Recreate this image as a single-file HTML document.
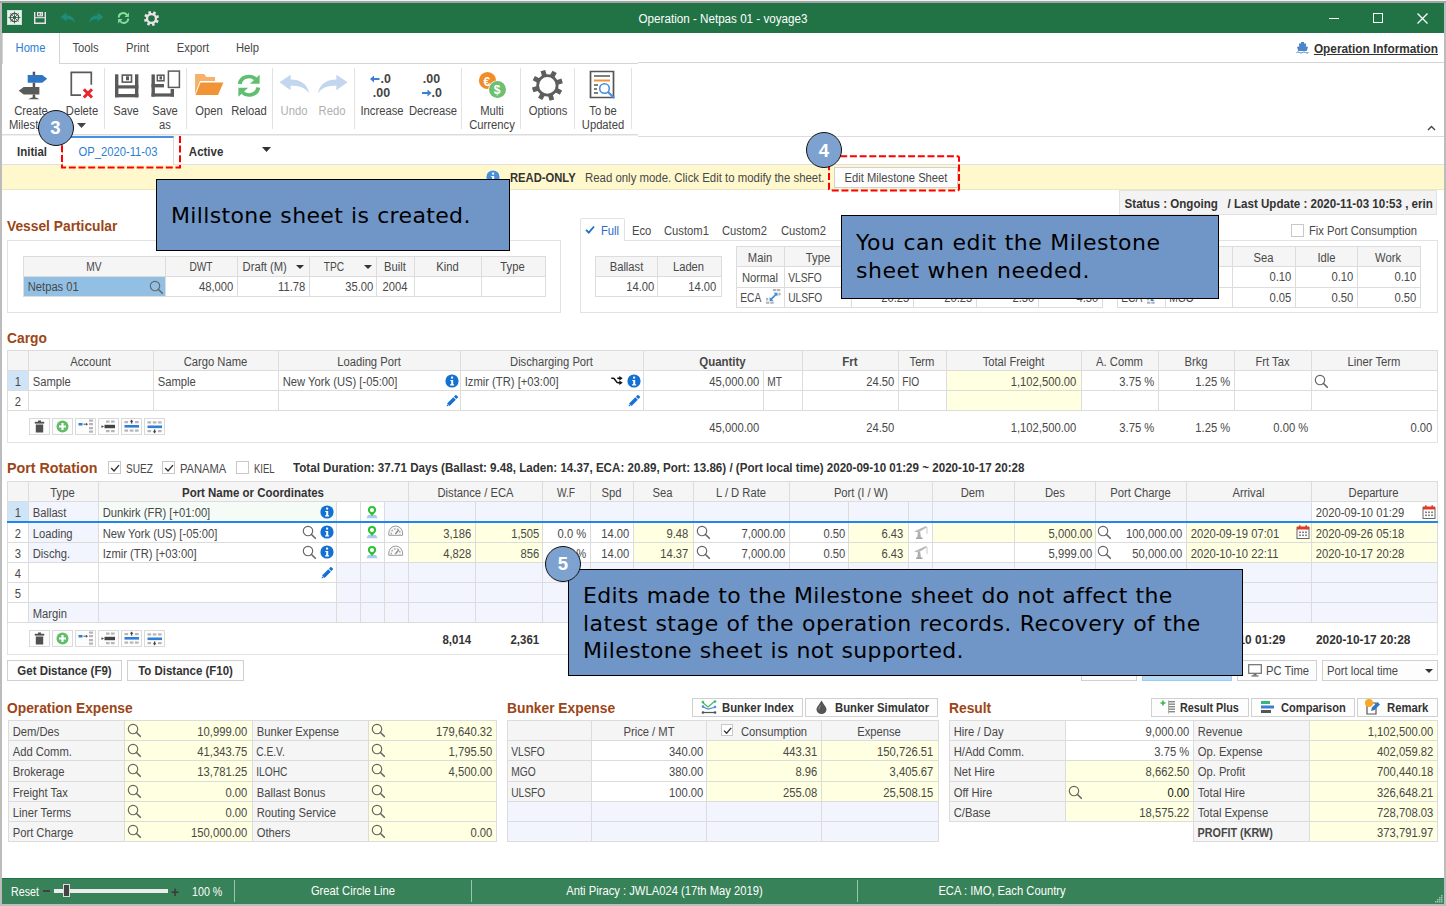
<!DOCTYPE html>
<html><head><meta charset="utf-8"><title>Operation - Netpas 01 - voyage3</title>
<style>
html,body{margin:0;padding:0;}
body{width:1446px;height:906px;overflow:hidden;position:relative;background:#fff;font-family:"Liberation Sans",sans-serif;font-size:12px;color:#484848;}
#root{position:absolute;left:0;top:0;width:1446px;height:906px;overflow:hidden;}
#root div,#root svg{position:absolute;box-sizing:border-box;}
.t{white-space:nowrap;overflow:visible;}
.b{font-weight:bold;color:#333;}
</style></head>
<body><div id="root">
<div style="left:0px;top:0px;width:1446px;height:906px;background:#bcbcbc;"></div>
<div style="left:0px;top:0px;width:1446px;height:1px;background:#f0f0f0;"></div>
<div style="left:0px;top:1px;width:1446px;height:2px;background:#a4a4a4;"></div>
<div style="left:2px;top:3px;width:1442px;height:901px;background:#fff;"></div>
<div style="left:2px;top:3px;width:1442px;height:30px;background:#217346;"></div>
<div class="t" style="left:2px;top:3.5px;width:1442px;height:31px;line-height:31px;text-align:center;transform-origin:center center;transform:scaleX(0.97);color:#fff;">Operation - Netpas 01 - voyage3</div>
<svg style="left:7px;top:10px" width="15" height="15" viewBox="0 0 15 15"><rect x="0.500" y="0.500" width="14" height="14" fill="#e9f1ec" stroke="#cfe0d5"/><circle cx="7.500" cy="7.500" r="4.200" fill="none" stroke="#3a5a48" stroke-width="1.300"/><circle cx="7.500" cy="7.500" r="1.600" fill="#3a5a48"/><path d="M7.500 1.500v12M1.500 7.500h12M3.300 3.300l8.400 8.400M11.700 3.300l-8.400 8.400" stroke="#3a5a48" stroke-width="0.800"/></svg>
<svg style="left:34px;top:12px" width="12" height="12" viewBox="0 0 12 12"><path d="M0.700 0v11.300h10.600V0" fill="none" stroke="#ece2e8" stroke-width="1.400"/><path d="M1 5.700h10" stroke="#ece2e8" stroke-width="1.100"/><rect x="3.600" y="0.600" width="4.800" height="3.200" fill="none" stroke="#ece2e8" stroke-width="1.200"/><rect x="5.600" y="1.200" width="1.800" height="2" fill="#ece2e8"/></svg>
<svg style="left:60px;top:11.5px" width="16" height="12" viewBox="0 0 16 12"><path d="M0.500 5L6.500 0.500V3.200C11.500 3.200 14.500 6 15 11C13 8 10.500 7 6.500 7V9.500z" fill="#1f8c7a"/></svg>
<svg style="left:88px;top:11.5px" width="16" height="12" viewBox="0 0 16 12"><path d="M15.500 5L9.500 0.500V3.200C4.500 3.200 1.500 6 1 11C3 8 5.500 7 9.500 7V9.500z" fill="#1f8c7a"/></svg>
<svg style="left:117px;top:12px" width="13" height="12" viewBox="0 0 15 14" preserveAspectRatio="none"><path d="M2 6.500A5.200 5.200 0 0111.500 3.500" fill="none" stroke="#84dc9c" stroke-width="2.200"/><path d="M13.800 0.500V5.800H8.500z" fill="#84dc9c"/><path d="M13 7.500A5.200 5.200 0 013.500 10.500" fill="none" stroke="#84dc9c" stroke-width="2.200"/><path d="M1.200 13.500V8.200H6.500z" fill="#84dc9c"/></svg>
<svg style="left:143.8px;top:10.5px" width="15.0" height="15.0" viewBox="0 0 15.0 15.0"><circle cx="7.5" cy="7.5" r="4.45" fill="none" stroke="#ebe3e7" stroke-width="2.30"/><rect x="6.20" y="0" width="2.60" height="2.90" fill="#ebe3e7" transform="rotate(-17.0 7.5 7.5)"/><rect x="6.20" y="0" width="2.60" height="2.90" fill="#ebe3e7" transform="rotate(28.0 7.5 7.5)"/><rect x="6.20" y="0" width="2.60" height="2.90" fill="#ebe3e7" transform="rotate(73.0 7.5 7.5)"/><rect x="6.20" y="0" width="2.60" height="2.90" fill="#ebe3e7" transform="rotate(118.0 7.5 7.5)"/><rect x="6.20" y="0" width="2.60" height="2.90" fill="#ebe3e7" transform="rotate(163.0 7.5 7.5)"/><rect x="6.20" y="0" width="2.60" height="2.90" fill="#ebe3e7" transform="rotate(208.0 7.5 7.5)"/><rect x="6.20" y="0" width="2.60" height="2.90" fill="#ebe3e7" transform="rotate(253.0 7.5 7.5)"/><rect x="6.20" y="0" width="2.60" height="2.90" fill="#ebe3e7" transform="rotate(298.0 7.5 7.5)"/></svg>
<div style="left:1329px;top:18px;width:10px;height:1px;background:#fff;"></div>
<div style="left:1373px;top:13px;width:10px;height:10px;border:1px solid #fff;"></div>
<svg style="left:1417px;top:13px" width="11" height="11" viewBox="0 0 11 11"><path d="M0.500 0.500l10 10M10.500 0.500l-10 10" stroke="#fff" stroke-width="1.300"/></svg>
<div style="left:638px;top:62px;width:806px;height:1px;background:#d4d4d4;"></div>
<div style="left:2px;top:63px;width:636px;height:1px;background:#d4d4d4;"></div>
<div style="left:2px;top:33px;width:58px;height:31px;background:#fff;border:1px solid #d4d4d4;border-bottom:none;border-top:none;"></div>
<div class="t" style="left:2px;top:34px;width:57px;height:29px;line-height:29px;text-align:center;transform-origin:center center;transform:scaleX(0.935);color:#2a7fd4;">Home</div>
<div class="t" style="left:60px;top:34px;width:51px;height:29px;line-height:29px;text-align:center;transform-origin:center center;transform:scaleX(0.935);">Tools</div>
<div class="t" style="left:112px;top:34px;width:51px;height:29px;line-height:29px;text-align:center;transform-origin:center center;transform:scaleX(0.935);">Print</div>
<div class="t" style="left:163px;top:34px;width:60px;height:29px;line-height:29px;text-align:center;transform-origin:center center;transform:scaleX(0.935);">Export</div>
<div class="t" style="left:222px;top:34px;width:51px;height:29px;line-height:29px;text-align:center;transform-origin:center center;transform:scaleX(0.935);">Help</div>
<div class="t b" style="left:1300px;top:34.5px;width:138px;height:29px;line-height:29px;text-align:right;padding-right:0px;transform-origin:right center;transform:scaleX(0.985);"><u>Operation Information</u></div>
<svg style="left:1296px;top:41px" width="13" height="13" viewBox="0 0 13 13"><path d="M3 5V2.500h2V1h3v1.500h2V5z" fill="#4a86c9"/><path d="M1 6l5.500-1.800L12 6l-1.300 4H2.300z" fill="#4a86c9"/><path d="M0.500 11.500q1.500-1.200 3 0t3 0t3 0t3 0" fill="none" stroke="#4a86c9" stroke-width="1"/></svg>
<div style="left:2px;top:134px;width:636px;height:1px;background:#dcdcdc;"></div>
<div style="left:2px;top:135px;width:636px;height:1px;background:#efefef;"></div>
<div style="left:638px;top:136px;width:806px;height:1px;background:#dcdcdc;"></div>
<div style="left:104px;top:68px;width:1px;height:61px;background:#e2e2e2;"></div>
<div style="left:186px;top:68px;width:1px;height:61px;background:#e2e2e2;"></div>
<div style="left:272px;top:68px;width:1px;height:61px;background:#e2e2e2;"></div>
<div style="left:354px;top:68px;width:1px;height:61px;background:#e2e2e2;"></div>
<div style="left:461px;top:68px;width:1px;height:61px;background:#e2e2e2;"></div>
<div style="left:520px;top:68px;width:1px;height:61px;background:#e2e2e2;"></div>
<div style="left:574px;top:68px;width:1px;height:61px;background:#e2e2e2;"></div>
<div style="left:631px;top:68px;width:1px;height:61px;background:#e2e2e2;"></div>
<div class="t" style="left:8px;top:104px;width:46px;height:14px;line-height:14px;text-align:center;transform-origin:center center;transform:scaleX(0.935);color:#444;">Create</div>
<div class="t" style="left:4px;top:118px;width:58px;height:14px;line-height:14px;text-align:center;transform-origin:center center;transform:scaleX(0.935);color:#444;">Milestone</div>
<div class="t" style="left:60px;top:104px;width:44px;height:14px;line-height:14px;text-align:center;transform-origin:center center;transform:scaleX(0.935);color:#444;">Delete</div>
<svg style="left:77px;top:123px" width="9" height="5" viewBox="0 0 9 5"><path d="M0 0h9L4.500 5z" fill="#444"/></svg>
<div class="t" style="left:106px;top:104px;width:40px;height:14px;line-height:14px;text-align:center;transform-origin:center center;transform:scaleX(0.935);color:#444;">Save</div>
<div class="t" style="left:146px;top:104px;width:38px;height:14px;line-height:14px;text-align:center;transform-origin:center center;transform:scaleX(0.935);color:#444;">Save</div>
<div class="t" style="left:146px;top:118px;width:38px;height:14px;line-height:14px;text-align:center;transform-origin:center center;transform:scaleX(0.935);color:#444;">as</div>
<div class="t" style="left:188px;top:104px;width:42px;height:14px;line-height:14px;text-align:center;transform-origin:center center;transform:scaleX(0.935);color:#444;">Open</div>
<div class="t" style="left:226px;top:104px;width:46px;height:14px;line-height:14px;text-align:center;transform-origin:center center;transform:scaleX(0.935);color:#444;">Reload</div>
<div class="t" style="left:274px;top:104px;width:40px;height:14px;line-height:14px;text-align:center;transform-origin:center center;transform:scaleX(0.935);color:#b0b0b0;">Undo</div>
<div class="t" style="left:312px;top:104px;width:40px;height:14px;line-height:14px;text-align:center;transform-origin:center center;transform:scaleX(0.935);color:#b0b0b0;">Redo</div>
<div class="t" style="left:356px;top:104px;width:52px;height:14px;line-height:14px;text-align:center;transform-origin:center center;transform:scaleX(0.935);color:#444;">Increase</div>
<div class="t" style="left:406px;top:104px;width:54px;height:14px;line-height:14px;text-align:center;transform-origin:center center;transform:scaleX(0.935);color:#444;">Decrease</div>
<div class="t" style="left:464px;top:104px;width:56px;height:14px;line-height:14px;text-align:center;transform-origin:center center;transform:scaleX(0.935);color:#444;">Multi</div>
<div class="t" style="left:464px;top:118px;width:56px;height:14px;line-height:14px;text-align:center;transform-origin:center center;transform:scaleX(0.935);color:#444;">Currency</div>
<div class="t" style="left:522px;top:104px;width:52px;height:14px;line-height:14px;text-align:center;transform-origin:center center;transform:scaleX(0.935);color:#444;">Options</div>
<div class="t" style="left:576px;top:104px;width:54px;height:14px;line-height:14px;text-align:center;transform-origin:center center;transform:scaleX(0.935);color:#444;">To be</div>
<div class="t" style="left:576px;top:118px;width:54px;height:14px;line-height:14px;text-align:center;transform-origin:center center;transform:scaleX(0.935);color:#444;">Updated</div>
<svg style="left:1427px;top:125px" width="9" height="6" viewBox="0 0 9 6"><path d="M1 5l3.500-3.500L8 5" fill="none" stroke="#444" stroke-width="1.400"/></svg>
<svg style="left:17px;top:70px" width="32" height="32" viewBox="0 0 32 32"><rect x="15.700" y="1.700" width="2.500" height="4" fill="#555"/><path d="M10.700 5h14.500l5 3.850-5 3.850H10.700z" fill="#2f74c5"/><rect x="15.700" y="12.700" width="2.500" height="4.500" fill="#555"/><path d="M22.400 17H6.700l-5 3.750 5 3.750h15.700z" fill="#5a5a5a"/><rect x="15.700" y="24.500" width="2.500" height="3.500" fill="#555"/><path d="M11.400 29.300q5.500-4.200 11 0z" fill="#5a5a5a"/></svg>
<svg style="left:69px;top:70px" width="28" height="32" viewBox="0 0 28 32"><path d="M1.500 2.400h20.800V14.800" fill="none" stroke="#5a5a5a" stroke-width="1.700"/><path d="M2.300 2.400v22.700h9.700" fill="none" stroke="#5a5a5a" stroke-width="1.700"/><path d="M14.800 19.300l8.200 8.200M23 19.300l-8.200 8.200" stroke="#e8242c" stroke-width="3"/></svg>
<svg style="left:115px;top:73.5px" width="24" height="24" viewBox="0 0 24 24"><g fill="#5a5a5a"><rect x="0" y="0.300" width="3.400" height="23"/><rect x="20" y="0.300" width="3.400" height="23"/><rect x="0" y="20" width="23.400" height="3.300"/><rect x="0" y="11.300" width="23.400" height="3.200"/><rect x="11" y="2.300" width="3" height="4"/></g><rect x="7.300" y="1.100" width="9.200" height="7" fill="none" stroke="#5a5a5a" stroke-width="1.600"/></svg>
<svg style="left:151px;top:70px" width="30" height="28" viewBox="0 0 30 28"><g fill="#5a5a5a"><rect x="0.500" y="4.400" width="3.400" height="22.200"/><rect x="0.500" y="23.400" width="22.500" height="3.200"/><rect x="19.600" y="19" width="3.400" height="7.600"/><rect x="0.500" y="14" width="12.500" height="3.400"/><rect x="8.500" y="6.300" width="2.500" height="3.200"/></g><rect x="6.300" y="5.200" width="6.700" height="5.600" fill="none" stroke="#5a5a5a" stroke-width="1.500"/><rect x="17.400" y="1.100" width="11" height="16.300" fill="#fff" stroke="#5a5a5a" stroke-width="1.500"/></svg>
<svg style="left:194px;top:73px" width="30" height="24" viewBox="0 0 30 24"><path d="M1 1h9l2.500 3H21v4H6L1 21z" fill="#f6b26b"/><path d="M6.500 9.500H29.500L24 22H1.500z" fill="#f29436"/></svg>
<svg style="left:236.500px;top:73.500px" width="24" height="23.500" viewBox="0 0 26 28" preserveAspectRatio="none"><path d="M3 12A10 10 0 0120 6" fill="none" stroke="#5fbf6f" stroke-width="4.400"/><path d="M24.500 1v10.500H14z" fill="#5fbf6f"/><path d="M23 16A10 10 0 016 22" fill="none" stroke="#5fbf6f" stroke-width="4.400"/><path d="M1.500 27V16.500H12z" fill="#5fbf6f"/></svg>
<svg style="left:279px;top:73.500px" width="31" height="20" viewBox="0 0 32 24" preserveAspectRatio="none"><path d="M0.500 10L12 1v5.500C22 6.500 29.500 12 31 23C26.500 16 21 14 12 14v5.500z" fill="#c2d6ee"/></svg>
<svg style="left:316.500px;top:73.500px" width="31" height="20" viewBox="0 0 32 24" preserveAspectRatio="none"><path d="M31.500 10L20 1v5.500C10 6.500 2.500 12 1 23C5.500 16 11 14 20 14v5.500z" fill="#c2d6ee"/></svg>
<div class="t" style="left:370px;top:71.5px;width:24px;height:14px;line-height:14px;padding-left:11px;transform-origin:left center;transform:scaleX(0.955);font-size:13px;color:#444;"><b>.0</b></div>
<div class="t" style="left:370px;top:85.5px;width:24px;height:14px;line-height:14px;padding-left:3px;transform-origin:left center;transform:scaleX(0.955);font-size:13px;color:#444;"><b>.00</b></div>
<svg style="left:370px;top:75px" width="10" height="8" viewBox="0 0 10 8"><path d="M0 4l4-3.500v2.400h5.500v2.200H4v2.400z" fill="#3b7fd0"/></svg>
<div class="t" style="left:420px;top:71.5px;width:30px;height:14px;line-height:14px;padding-left:3px;transform-origin:left center;transform:scaleX(0.955);font-size:13px;color:#444;"><b>.00</b></div>
<div class="t" style="left:420px;top:85.5px;width:30px;height:14px;line-height:14px;padding-left:12px;transform-origin:left center;transform:scaleX(0.955);font-size:13px;color:#444;"><b>.0</b></div>
<svg style="left:422px;top:89px" width="10" height="8" viewBox="0 0 10 8"><path d="M9.500 4l-4-3.500v2.400H0v2.200h5.500v2.400z" fill="#3b7fd0"/></svg>
<svg style="left:478px;top:71px" width="30" height="28" viewBox="0 0 30 28"><circle cx="9.500" cy="9.500" r="8.600" fill="#f28c28"/><circle cx="19.500" cy="18.500" r="9.300" fill="#fff"/><circle cx="19.500" cy="18.500" r="8.500" fill="#6cc070"/><text x="5.500" y="14.500" font-family="Liberation Sans,sans-serif" font-weight="bold" font-size="12" fill="#fff">€</text><text x="15.800" y="23" font-family="Liberation Sans,sans-serif" font-weight="bold" font-size="12" fill="#fff">$</text></svg>
<svg style="left:532.1px;top:70px" width="30.8" height="30.8" viewBox="0 0 30.8 30.8"><circle cx="15.4" cy="15.4" r="9.70" fill="none" stroke="#5e5e5e" stroke-width="2.80"/><rect x="13.00" y="0" width="4.80" height="5.30" fill="#5e5e5e" transform="rotate(-17.0 15.4 15.4)"/><rect x="13.00" y="0" width="4.80" height="5.30" fill="#5e5e5e" transform="rotate(28.0 15.4 15.4)"/><rect x="13.00" y="0" width="4.80" height="5.30" fill="#5e5e5e" transform="rotate(73.0 15.4 15.4)"/><rect x="13.00" y="0" width="4.80" height="5.30" fill="#5e5e5e" transform="rotate(118.0 15.4 15.4)"/><rect x="13.00" y="0" width="4.80" height="5.30" fill="#5e5e5e" transform="rotate(163.0 15.4 15.4)"/><rect x="13.00" y="0" width="4.80" height="5.30" fill="#5e5e5e" transform="rotate(208.0 15.4 15.4)"/><rect x="13.00" y="0" width="4.80" height="5.30" fill="#5e5e5e" transform="rotate(253.0 15.4 15.4)"/><rect x="13.00" y="0" width="4.80" height="5.30" fill="#5e5e5e" transform="rotate(298.0 15.4 15.4)"/></svg>
<svg style="left:589px;top:70px" width="28" height="30" viewBox="0 0 28 30"><path d="M1.500 1.500h23v26h-23z" fill="#fff" stroke="#555" stroke-width="1.700"/><path d="M5 6h16" stroke="#555" stroke-width="1.500"/><path d="M5 10.500h16" stroke="#f29436" stroke-width="2"/><path d="M5 15h4M5 19h3M5 23h4" stroke="#555" stroke-width="1.700"/><circle cx="15.500" cy="18.500" r="4.800" fill="#fff" stroke="#4a8fd8" stroke-width="1.600"/><path d="M19 22l6.300 6" stroke="#4a8fd8" stroke-width="2.200"/></svg>
<div style="left:2px;top:164px;width:1442px;height:1px;background:#e0e0e0;"></div>
<div class="t b" style="left:8px;top:138.8px;width:48px;height:27px;line-height:27px;text-align:center;transform-origin:center center;transform:scaleX(0.955);">Initial</div>
<div style="left:62px;top:136px;width:112px;height:29px;background:#fff;border:1px solid #d9d9d9;border-top:2px solid #4a90e2;border-bottom:none;"></div>
<div class="t" style="left:62px;top:138.8px;width:112px;height:27px;line-height:27px;text-align:center;transform-origin:center center;transform:scaleX(0.935);color:#2a7fd4;">OP_2020-11-03</div>
<div class="t b" style="left:186px;top:138.8px;width:50px;height:27px;line-height:27px;padding-left:3px;transform-origin:left center;transform:scaleX(0.955);">Active</div>
<svg style="left:262px;top:147px" width="9" height="5" viewBox="0 0 9 5"><path d="M0 0h9L4.500 5z" fill="#333"/></svg>
<div style="left:2px;top:165px;width:1442px;height:25px;background:#fff8cd;border-bottom:1px solid #ebe6c3;"></div>
<svg style="left:485.7px;top:169.6px" width="14" height="14" viewBox="0 0 14 14"><circle cx="7" cy="7" r="6.600" fill="#4a8fd9"/><rect x="6.100" y="2.600" width="2" height="2" fill="#fff"/><path d="M5.300 6h2.900v4.300h0.900v1.100H5.100v-1.100h1.100V7.100H5.300z" fill="#fff"/></svg>
<div class="t b" style="left:510px;top:165px;width:70px;height:26px;line-height:26px;padding-left:0px;transform-origin:left center;transform:scaleX(0.935);">READ-ONLY</div>
<div class="t" style="left:585px;top:165px;width:250px;height:26px;line-height:26px;padding-left:0px;transform-origin:left center;transform:scaleX(0.95);">Read only mode. Click Edit to modify the sheet.</div>
<div style="left:834px;top:167px;width:124px;height:21px;background:#fdfdfd;border:1px solid #d0d0d0;"></div>
<div class="t" style="left:834px;top:167.8px;width:124px;height:21px;line-height:21px;text-align:center;transform-origin:center center;transform:scaleX(0.935);">Edit Milestone Sheet</div>
<div style="left:1119px;top:190px;width:318px;height:25px;background:#f3f3f3;border:1px solid #e2e2e2;"></div>
<div class="t b" style="left:1119px;top:190.5px;width:318px;height:26px;line-height:26px;text-align:center;transform-origin:center center;transform:scaleX(0.965);">Status : Ongoing &nbsp; / Last Update : 2020-11-03 10:53 , erin</div>
<div class="t" style="left:7px;top:215px;width:200px;height:22px;line-height:22px;padding-left:0px;transform-origin:left center;transform:scaleX(0.985);color:#9c4516;font-size:14px;font-weight:bold;">Vessel Particular</div>
<div style="left:7px;top:240px;width:554px;height:73px;background:#fff;border:1px solid #e2e2e2;"></div>
<div style="left:24px;top:257px;width:141px;height:19px;background:#f5f5f5;"></div>
<div style="left:166px;top:257px;width:71px;height:19px;background:#f5f5f5;"></div>
<div style="left:238px;top:257px;width:71px;height:19px;background:#f5f5f5;"></div>
<div style="left:310px;top:257px;width:66px;height:19px;background:#f5f5f5;"></div>
<div style="left:377px;top:257px;width:37px;height:19px;background:#f5f5f5;"></div>
<div style="left:415px;top:257px;width:66px;height:19px;background:#f5f5f5;"></div>
<div style="left:482px;top:257px;width:63px;height:19px;background:#f5f5f5;"></div>
<div style="left:24px;top:277px;width:141px;height:19px;background:#92c0e4;"></div>
<div style="left:23px;top:256px;width:523px;height:1px;background:#dcdcdc;"></div>
<div style="left:23px;top:276px;width:523px;height:1px;background:#dcdcdc;"></div>
<div style="left:23px;top:296px;width:523px;height:1px;background:#dcdcdc;"></div>
<div style="left:23px;top:256px;width:1px;height:41px;background:#dcdcdc;"></div>
<div style="left:165px;top:256px;width:1px;height:41px;background:#dcdcdc;"></div>
<div style="left:237px;top:256px;width:1px;height:41px;background:#dcdcdc;"></div>
<div style="left:309px;top:256px;width:1px;height:41px;background:#dcdcdc;"></div>
<div style="left:376px;top:256px;width:1px;height:41px;background:#dcdcdc;"></div>
<div style="left:414px;top:256px;width:1px;height:41px;background:#dcdcdc;"></div>
<div style="left:481px;top:256px;width:1px;height:41px;background:#dcdcdc;"></div>
<div style="left:545px;top:256px;width:1px;height:41px;background:#dcdcdc;"></div>
<div class="t" style="left:23px;top:256.8px;width:142px;height:21px;line-height:21px;text-align:center;transform-origin:center center;transform:scaleX(0.85);">MV</div>
<div class="t" style="left:165px;top:256.8px;width:72px;height:21px;line-height:21px;text-align:center;transform-origin:center center;transform:scaleX(0.85);">DWT</div>
<div class="t" style="left:237px;top:256.8px;width:72px;height:21px;line-height:21px;padding-left:6px;transform-origin:left center;transform:scaleX(0.935);">Draft (M)</div>
<svg style="left:296px;top:265px" width="8" height="4" viewBox="0 0 8 4"><path d="M0 0h8L4 4z" fill="#333"/></svg>
<div class="t" style="left:309px;top:256.8px;width:50px;height:21px;line-height:21px;text-align:center;transform-origin:center center;transform:scaleX(0.85);">TPC</div>
<svg style="left:364px;top:265px" width="8" height="4" viewBox="0 0 8 4"><path d="M0 0h8L4 4z" fill="#333"/></svg>
<div class="t" style="left:376px;top:256.8px;width:38px;height:21px;line-height:21px;text-align:center;transform-origin:center center;transform:scaleX(0.935);">Built</div>
<div class="t" style="left:414px;top:256.8px;width:67px;height:21px;line-height:21px;text-align:center;transform-origin:center center;transform:scaleX(0.935);">Kind</div>
<div class="t" style="left:481px;top:256.8px;width:63px;height:21px;line-height:21px;text-align:center;transform-origin:center center;transform:scaleX(0.935);">Type</div>
<div class="t" style="left:23px;top:276.8px;width:142px;height:21px;line-height:21px;padding-left:5px;transform-origin:left center;transform:scaleX(0.935);">Netpas 01</div>
<svg style="left:149px;top:279.8px" width="15" height="15" viewBox="0 0 15 15"><circle cx="6" cy="6" r="4.700" fill="none" stroke="#666" stroke-width="1.150"/><path d="M9.500 9.500L13.300 13.300" stroke="#666" stroke-width="1.600" stroke-linecap="round"/></svg>
<div class="t" style="left:165px;top:276.8px;width:72px;height:21px;line-height:21px;text-align:right;padding-right:4px;transform-origin:right center;transform:scaleX(0.935);">48,000</div>
<div class="t" style="left:237px;top:276.8px;width:72px;height:21px;line-height:21px;text-align:right;padding-right:4px;transform-origin:right center;transform:scaleX(0.935);">11.78</div>
<div class="t" style="left:309px;top:276.8px;width:68px;height:21px;line-height:21px;text-align:right;padding-right:4px;transform-origin:right center;transform:scaleX(0.935);">35.00</div>
<div class="t" style="left:376px;top:276.8px;width:38px;height:21px;line-height:21px;text-align:center;transform-origin:center center;transform:scaleX(0.935);">2004</div>
<div style="left:580px;top:240px;width:858px;height:73px;background:#fff;border:1px solid #e2e2e2;"></div>
<div style="left:580px;top:218px;width:45px;height:23px;background:#fff;border:1px solid #e2e2e2;border-bottom:none;border-radius:2px 2px 0 0;"></div>
<svg style="left:585px;top:225px" width="10" height="9" viewBox="0 0 10 9"><path d="M1 4.800l2.800 2.800L9 1.500" fill="none" stroke="#1f6fd0" stroke-width="1.800"/></svg>
<div class="t" style="left:601px;top:220.5px;width:24px;height:21px;line-height:21px;padding-left:0px;transform-origin:left center;transform:scaleX(0.935);color:#2b6cc4;">Full</div>
<div class="t" style="left:632px;top:220.5px;width:30px;height:21px;line-height:21px;padding-left:0px;transform-origin:left center;transform:scaleX(0.935);">Eco</div>
<div class="t" style="left:664px;top:220.5px;width:50px;height:21px;line-height:21px;padding-left:0px;transform-origin:left center;transform:scaleX(0.935);">Custom1</div>
<div class="t" style="left:722px;top:220.5px;width:50px;height:21px;line-height:21px;padding-left:0px;transform-origin:left center;transform:scaleX(0.935);">Custom2</div>
<div class="t" style="left:781px;top:220.5px;width:50px;height:21px;line-height:21px;padding-left:0px;transform-origin:left center;transform:scaleX(0.935);">Custom2</div>
<div style="left:596px;top:257px;width:61px;height:19px;background:#f5f5f5;"></div>
<div style="left:658px;top:257px;width:63px;height:19px;background:#f5f5f5;"></div>
<div style="left:595px;top:256px;width:127px;height:1px;background:#dcdcdc;"></div>
<div style="left:595px;top:276px;width:127px;height:1px;background:#dcdcdc;"></div>
<div style="left:595px;top:296px;width:127px;height:1px;background:#dcdcdc;"></div>
<div style="left:595px;top:256px;width:1px;height:41px;background:#dcdcdc;"></div>
<div style="left:657px;top:256px;width:1px;height:41px;background:#dcdcdc;"></div>
<div style="left:721px;top:256px;width:1px;height:41px;background:#dcdcdc;"></div>
<div class="t" style="left:595px;top:256.8px;width:63px;height:21px;line-height:21px;text-align:center;transform-origin:center center;transform:scaleX(0.935);">Ballast</div>
<div class="t" style="left:657px;top:256.8px;width:63px;height:21px;line-height:21px;text-align:center;transform-origin:center center;transform:scaleX(0.935);">Laden</div>
<div class="t" style="left:595px;top:276.8px;width:63px;height:21px;line-height:21px;text-align:right;padding-right:4px;transform-origin:right center;transform:scaleX(0.935);">14.00</div>
<div class="t" style="left:657px;top:276.8px;width:63px;height:21px;line-height:21px;text-align:right;padding-right:4px;transform-origin:right center;transform:scaleX(0.935);">14.00</div>
<div style="left:737px;top:247px;width:47px;height:19px;background:#f5f5f5;"></div>
<div style="left:785px;top:247px;width:66px;height:19px;background:#f5f5f5;"></div>
<div style="left:852px;top:247px;width:61px;height:19px;background:#f5f5f5;"></div>
<div style="left:914px;top:247px;width:62px;height:19px;background:#f5f5f5;"></div>
<div style="left:977px;top:247px;width:61px;height:19px;background:#f5f5f5;"></div>
<div style="left:1039px;top:247px;width:63px;height:19px;background:#f5f5f5;"></div>
<div style="left:736px;top:246px;width:367px;height:1px;background:#dcdcdc;"></div>
<div style="left:736px;top:266px;width:367px;height:1px;background:#dcdcdc;"></div>
<div style="left:736px;top:287px;width:367px;height:1px;background:#dcdcdc;"></div>
<div style="left:736px;top:307px;width:367px;height:1px;background:#dcdcdc;"></div>
<div style="left:736px;top:246px;width:1px;height:62px;background:#dcdcdc;"></div>
<div style="left:784px;top:246px;width:1px;height:62px;background:#dcdcdc;"></div>
<div style="left:851px;top:246px;width:1px;height:62px;background:#dcdcdc;"></div>
<div style="left:913px;top:246px;width:1px;height:62px;background:#dcdcdc;"></div>
<div style="left:976px;top:246px;width:1px;height:62px;background:#dcdcdc;"></div>
<div style="left:1038px;top:246px;width:1px;height:62px;background:#dcdcdc;"></div>
<div style="left:1102px;top:246px;width:1px;height:62px;background:#dcdcdc;"></div>
<div class="t" style="left:736px;top:247.5px;width:48px;height:21px;line-height:21px;text-align:center;transform-origin:center center;transform:scaleX(0.935);">Main</div>
<div class="t" style="left:784px;top:247.5px;width:68px;height:21px;line-height:21px;text-align:center;transform-origin:center center;transform:scaleX(0.935);">Type</div>
<div class="t" style="left:736px;top:267.5px;width:48px;height:20px;line-height:20px;text-align:center;transform-origin:center center;transform:scaleX(0.935);">Normal</div>
<div class="t" style="left:784px;top:267.5px;width:68px;height:20px;line-height:20px;padding-left:5px;transform-origin:left center;transform:scaleX(0.85);">VLSFO</div>
<div class="t" style="left:736px;top:287.5px;width:30px;height:20px;line-height:20px;padding-left:5px;transform-origin:left center;transform:scaleX(0.85);">ECA</div>
<div class="t" style="left:784px;top:287.5px;width:68px;height:20px;line-height:20px;padding-left:5px;transform-origin:left center;transform:scaleX(0.85);">ULSFO</div>
<svg style="left:766px;top:289.4px" width="16" height="15" viewBox="0 0 16 15"><g fill="#b4b4b4"><rect x="6.800" y="0" width="3.400" height="2.200"/><rect x="10.900" y="0" width="3.400" height="2.200"/><rect x="12.400" y="3.800" width="2.200" height="2.600"/><rect x="0" y="8.800" width="2.200" height="2.600"/><rect x="0" y="12.600" width="3.400" height="2.200"/><rect x="4.300" y="12.600" width="3.400" height="2.200"/></g><path d="M5 10.400L10 5.400" stroke="#3d8ad8" stroke-width="1.600"/><path d="M7.600 3.700h3.900v3.900z" fill="#3d8ad8"/><path d="M3.600 8v3.900h3.900z" fill="#3d8ad8"/></svg>
<div class="t" style="left:851px;top:287.5px;width:62px;height:20px;line-height:20px;text-align:right;padding-right:4px;transform-origin:right center;transform:scaleX(0.935);">20.25</div>
<div class="t" style="left:913px;top:287.5px;width:63px;height:20px;line-height:20px;text-align:right;padding-right:4px;transform-origin:right center;transform:scaleX(0.935);">20.25</div>
<div class="t" style="left:976px;top:287.5px;width:62px;height:20px;line-height:20px;text-align:right;padding-right:4px;transform-origin:right center;transform:scaleX(0.935);">2.50</div>
<div class="t" style="left:1038px;top:287.5px;width:64px;height:20px;line-height:20px;text-align:right;padding-right:4px;transform-origin:right center;transform:scaleX(0.935);">4.50</div>
<div style="left:1118px;top:247px;width:47px;height:19px;background:#f5f5f5;"></div>
<div style="left:1166px;top:247px;width:66px;height:19px;background:#f5f5f5;"></div>
<div style="left:1233px;top:247px;width:62px;height:19px;background:#f5f5f5;"></div>
<div style="left:1296px;top:247px;width:61px;height:19px;background:#f5f5f5;"></div>
<div style="left:1358px;top:247px;width:62px;height:19px;background:#f5f5f5;"></div>
<div style="left:1117px;top:246px;width:304px;height:1px;background:#dcdcdc;"></div>
<div style="left:1117px;top:266px;width:304px;height:1px;background:#dcdcdc;"></div>
<div style="left:1117px;top:287px;width:304px;height:1px;background:#dcdcdc;"></div>
<div style="left:1117px;top:307px;width:304px;height:1px;background:#dcdcdc;"></div>
<div style="left:1117px;top:246px;width:1px;height:62px;background:#dcdcdc;"></div>
<div style="left:1165px;top:246px;width:1px;height:62px;background:#dcdcdc;"></div>
<div style="left:1232px;top:246px;width:1px;height:62px;background:#dcdcdc;"></div>
<div style="left:1295px;top:246px;width:1px;height:62px;background:#dcdcdc;"></div>
<div style="left:1357px;top:246px;width:1px;height:62px;background:#dcdcdc;"></div>
<div style="left:1420px;top:246px;width:1px;height:62px;background:#dcdcdc;"></div>
<div class="t" style="left:1117px;top:287.5px;width:30px;height:20px;line-height:20px;padding-left:5px;transform-origin:left center;transform:scaleX(0.85);">ECA</div>
<div class="t" style="left:1165px;top:287.5px;width:60px;height:20px;line-height:20px;padding-left:5px;transform-origin:left center;transform:scaleX(0.85);">MGO</div>
<svg style="left:1147px;top:289.4px" width="16" height="15" viewBox="0 0 16 15"><g fill="#b4b4b4"><rect x="6.800" y="0" width="3.400" height="2.200"/><rect x="10.900" y="0" width="3.400" height="2.200"/><rect x="12.400" y="3.800" width="2.200" height="2.600"/><rect x="0" y="8.800" width="2.200" height="2.600"/><rect x="0" y="12.600" width="3.400" height="2.200"/><rect x="4.300" y="12.600" width="3.400" height="2.200"/></g><path d="M5 10.400L10 5.400" stroke="#3d8ad8" stroke-width="1.600"/><path d="M7.600 3.700h3.900v3.900z" fill="#3d8ad8"/><path d="M3.600 8v3.900h3.900z" fill="#3d8ad8"/></svg>
<div class="t" style="left:1232px;top:247.5px;width:63px;height:21px;line-height:21px;text-align:center;transform-origin:center center;transform:scaleX(0.935);">Sea</div>
<div class="t" style="left:1295px;top:247.5px;width:63px;height:21px;line-height:21px;text-align:center;transform-origin:center center;transform:scaleX(0.935);">Idle</div>
<div class="t" style="left:1357px;top:247.5px;width:62px;height:21px;line-height:21px;text-align:center;transform-origin:center center;transform:scaleX(0.935);">Work</div>
<div class="t" style="left:1232px;top:266.8px;width:63px;height:20px;line-height:20px;text-align:right;padding-right:4px;transform-origin:right center;transform:scaleX(0.935);">0.10</div>
<div class="t" style="left:1295px;top:266.8px;width:62px;height:20px;line-height:20px;text-align:right;padding-right:4px;transform-origin:right center;transform:scaleX(0.935);">0.10</div>
<div class="t" style="left:1357px;top:266.8px;width:63px;height:20px;line-height:20px;text-align:right;padding-right:4px;transform-origin:right center;transform:scaleX(0.935);">0.10</div>
<div class="t" style="left:1232px;top:287.8px;width:63px;height:20px;line-height:20px;text-align:right;padding-right:4px;transform-origin:right center;transform:scaleX(0.935);">0.05</div>
<div class="t" style="left:1295px;top:287.8px;width:62px;height:20px;line-height:20px;text-align:right;padding-right:4px;transform-origin:right center;transform:scaleX(0.935);">0.50</div>
<div class="t" style="left:1357px;top:287.8px;width:63px;height:20px;line-height:20px;text-align:right;padding-right:4px;transform-origin:right center;transform:scaleX(0.935);">0.50</div>
<div style="left:1291px;top:224px;width:13px;height:13px;background:#fff;border:1px solid #c8c8c8;"></div>
<div class="t" style="left:1309px;top:220.5px;width:120px;height:21px;line-height:21px;padding-left:0px;transform-origin:left center;transform:scaleX(0.935);">Fix Port Consumption</div>
<div class="t" style="left:7px;top:327px;width:100px;height:22px;line-height:22px;padding-left:0px;transform-origin:left center;transform:scaleX(0.985);color:#9c4516;font-size:14px;font-weight:bold;">Cargo</div>
<div style="left:7px;top:350px;width:1431px;height:93px;background:#fff;border:1px solid #e2e2e2;"></div>
<div style="left:8px;top:351px;width:20px;height:19px;background:#f5f5f5;"></div>
<div style="left:29px;top:351px;width:124px;height:19px;background:#f5f5f5;"></div>
<div style="left:154px;top:351px;width:124px;height:19px;background:#f5f5f5;"></div>
<div style="left:279px;top:351px;width:181px;height:19px;background:#f5f5f5;"></div>
<div style="left:461px;top:351px;width:182px;height:19px;background:#f5f5f5;"></div>
<div style="left:644px;top:351px;width:158px;height:19px;background:#f5f5f5;"></div>
<div style="left:803px;top:351px;width:95px;height:19px;background:#f5f5f5;"></div>
<div style="left:899px;top:351px;width:47px;height:19px;background:#f5f5f5;"></div>
<div style="left:947px;top:351px;width:134px;height:19px;background:#f5f5f5;"></div>
<div style="left:1082px;top:351px;width:76px;height:19px;background:#f5f5f5;"></div>
<div style="left:1159px;top:351px;width:75px;height:19px;background:#f5f5f5;"></div>
<div style="left:1235px;top:351px;width:76px;height:19px;background:#f5f5f5;"></div>
<div style="left:1312px;top:351px;width:125px;height:19px;background:#f5f5f5;"></div>
<div style="left:8px;top:371px;width:20px;height:19px;background:#cfe4f7;"></div>
<div style="left:947px;top:371px;width:134px;height:19px;background:#ffffe1;"></div>
<div style="left:947px;top:391px;width:134px;height:19px;background:#ffffe1;"></div>
<div style="left:7px;top:350px;width:1431px;height:1px;background:#dcdcdc;"></div>
<div style="left:7px;top:370px;width:1431px;height:1px;background:#dcdcdc;"></div>
<div style="left:7px;top:390px;width:1431px;height:1px;background:#dcdcdc;"></div>
<div style="left:7px;top:410px;width:1431px;height:1px;background:#dcdcdc;"></div>
<div style="left:7px;top:350px;width:1px;height:61px;background:#dcdcdc;"></div>
<div style="left:28px;top:350px;width:1px;height:61px;background:#dcdcdc;"></div>
<div style="left:153px;top:350px;width:1px;height:61px;background:#dcdcdc;"></div>
<div style="left:278px;top:350px;width:1px;height:61px;background:#dcdcdc;"></div>
<div style="left:460px;top:350px;width:1px;height:61px;background:#dcdcdc;"></div>
<div style="left:643px;top:350px;width:1px;height:61px;background:#dcdcdc;"></div>
<div style="left:802px;top:350px;width:1px;height:61px;background:#dcdcdc;"></div>
<div style="left:898px;top:350px;width:1px;height:61px;background:#dcdcdc;"></div>
<div style="left:946px;top:350px;width:1px;height:61px;background:#dcdcdc;"></div>
<div style="left:1081px;top:350px;width:1px;height:61px;background:#dcdcdc;"></div>
<div style="left:1158px;top:350px;width:1px;height:61px;background:#dcdcdc;"></div>
<div style="left:1234px;top:350px;width:1px;height:61px;background:#dcdcdc;"></div>
<div style="left:1311px;top:350px;width:1px;height:61px;background:#dcdcdc;"></div>
<div style="left:1437px;top:350px;width:1px;height:61px;background:#dcdcdc;"></div>
<div style="left:763px;top:371px;width:1px;height:39px;background:#dcdcdc;"></div>
<div class="t" style="left:28px;top:351.5px;width:125px;height:21px;line-height:21px;text-align:center;transform-origin:center center;transform:scaleX(0.935);">Account</div>
<div class="t" style="left:153px;top:351.5px;width:125px;height:21px;line-height:21px;text-align:center;transform-origin:center center;transform:scaleX(0.935);">Cargo Name</div>
<div class="t" style="left:278px;top:351.5px;width:182px;height:21px;line-height:21px;text-align:center;transform-origin:center center;transform:scaleX(0.935);">Loading Port</div>
<div class="t" style="left:460px;top:351.5px;width:183px;height:21px;line-height:21px;text-align:center;transform-origin:center center;transform:scaleX(0.935);">Discharging Port</div>
<div class="t" style="left:643px;top:351.5px;width:159px;height:21px;line-height:21px;text-align:center;transform-origin:center center;transform:scaleX(0.955);"><b>Quantity</b></div>
<div class="t" style="left:802px;top:351.5px;width:96px;height:21px;line-height:21px;text-align:center;transform-origin:center center;transform:scaleX(0.955);"><b>Frt</b></div>
<div class="t" style="left:898px;top:351.5px;width:48px;height:21px;line-height:21px;text-align:center;transform-origin:center center;transform:scaleX(0.935);">Term</div>
<div class="t" style="left:946px;top:351.5px;width:135px;height:21px;line-height:21px;text-align:center;transform-origin:center center;transform:scaleX(0.935);">Total Freight</div>
<div class="t" style="left:1081px;top:351.5px;width:77px;height:21px;line-height:21px;text-align:center;transform-origin:center center;transform:scaleX(0.935);">A. Comm</div>
<div class="t" style="left:1158px;top:351.5px;width:76px;height:21px;line-height:21px;text-align:center;transform-origin:center center;transform:scaleX(0.935);">Brkg</div>
<div class="t" style="left:1234px;top:351.5px;width:77px;height:21px;line-height:21px;text-align:center;transform-origin:center center;transform:scaleX(0.935);">Frt Tax</div>
<div class="t" style="left:1311px;top:351.5px;width:126px;height:21px;line-height:21px;text-align:center;transform-origin:center center;transform:scaleX(0.935);">Liner Term</div>
<div class="t" style="left:7px;top:371.5px;width:22px;height:21px;line-height:21px;text-align:center;transform-origin:center center;transform:scaleX(0.935);">1</div>
<div class="t" style="left:7px;top:391.5px;width:22px;height:21px;line-height:21px;text-align:center;transform-origin:center center;transform:scaleX(0.935);">2</div>
<div class="t" style="left:28px;top:371.5px;width:124px;height:21px;line-height:21px;padding-left:5px;transform-origin:left center;transform:scaleX(0.935);">Sample</div>
<div class="t" style="left:153px;top:371.5px;width:126px;height:21px;line-height:21px;padding-left:5px;transform-origin:left center;transform:scaleX(0.935);">Sample</div>
<div class="t" style="left:278px;top:371.5px;width:182px;height:21px;line-height:21px;padding-left:5px;transform-origin:left center;transform:scaleX(0.935);">New York (US) [-05:00]</div>
<svg style="left:444.5px;top:373.6px" width="14" height="14" viewBox="0 0 14 14"><circle cx="7" cy="7" r="6.600" fill="#1470d2"/><rect x="6.100" y="2.600" width="2" height="2" fill="#fff"/><path d="M5.300 6h2.900v4.300h0.900v1.100H5.100v-1.100h1.100V7.100H5.300z" fill="#fff"/></svg>
<div class="t" style="left:460px;top:371.5px;width:183px;height:21px;line-height:21px;padding-left:5px;transform-origin:left center;transform:scaleX(0.935);">Izmir (TR) [+03:00]</div>
<svg style="left:627px;top:373.6px" width="14" height="14" viewBox="0 0 14 14"><circle cx="7" cy="7" r="6.600" fill="#1470d2"/><rect x="6.100" y="2.600" width="2" height="2" fill="#fff"/><path d="M5.300 6h2.900v4.300h0.900v1.100H5.100v-1.100h1.100V7.100H5.300z" fill="#fff"/></svg>
<svg style="left:611px;top:376px" width="12" height="9" viewBox="0 0 12 9"><path d="M0.300 2.300h2c1.800 0 2.600 4.400 4.700 4.400h2" fill="none" stroke="#111" stroke-width="1.600"/><path d="M6.300 2.300h2.700" stroke="#111" stroke-width="1.600"/><path d="M8.300 0l3.400 2.300-3.400 2.300zM8.300 4.400l3.400 2.300-3.400 2.300z" fill="#111"/></svg>
<svg style="left:444.5px;top:394px" width="14" height="14" viewBox="0 0 14 14"><g transform="rotate(-45 7 7) translate(7 7) scale(1.13 1.1) translate(-7 -7)" fill="#1470d2"><rect x="2.400" y="5.400" width="7.800" height="3.200"/><rect x="10.900" y="5.400" width="2.500" height="3.200" rx="0.700"/><path d="M1.900 5.900L0.300 7l1.600 1.100z"/></g></svg>
<svg style="left:627px;top:394px" width="14" height="14" viewBox="0 0 14 14"><g transform="rotate(-45 7 7) translate(7 7) scale(1.13 1.1) translate(-7 -7)" fill="#1470d2"><rect x="2.400" y="5.400" width="7.800" height="3.200"/><rect x="10.900" y="5.400" width="2.500" height="3.200" rx="0.700"/><path d="M1.900 5.900L0.300 7l1.600 1.100z"/></g></svg>
<div class="t" style="left:643px;top:371.5px;width:120px;height:21px;line-height:21px;text-align:right;padding-right:4px;transform-origin:right center;transform:scaleX(0.935);">45,000.00</div>
<div class="t" style="left:763px;top:371.5px;width:39px;height:21px;line-height:21px;padding-left:5px;transform-origin:left center;transform:scaleX(0.85);">MT</div>
<div class="t" style="left:802px;top:371.5px;width:96px;height:21px;line-height:21px;text-align:right;padding-right:4px;transform-origin:right center;transform:scaleX(0.935);">24.50</div>
<div class="t" style="left:898px;top:371.5px;width:48px;height:21px;line-height:21px;padding-left:5px;transform-origin:left center;transform:scaleX(0.85);">FIO</div>
<div class="t" style="left:946px;top:371.5px;width:134px;height:21px;line-height:21px;text-align:right;padding-right:4px;transform-origin:right center;transform:scaleX(0.935);">1,102,500.00</div>
<div class="t" style="left:1081px;top:371.5px;width:77px;height:21px;line-height:21px;text-align:right;padding-right:4px;transform-origin:right center;transform:scaleX(0.935);">3.75 %</div>
<div class="t" style="left:1158px;top:371.5px;width:76px;height:21px;line-height:21px;text-align:right;padding-right:4px;transform-origin:right center;transform:scaleX(0.935);">1.25 %</div>
<svg style="left:1314px;top:374px" width="15" height="15" viewBox="0 0 15 15"><circle cx="6" cy="6" r="4.700" fill="none" stroke="#666" stroke-width="1.150"/><path d="M9.500 9.500L13.300 13.300" stroke="#666" stroke-width="1.600" stroke-linecap="round"/></svg>
<div style="left:29px;top:418px;width:21px;height:17px;background:#fdfdfd;border:1px solid #dadada;"></div>
<svg style="left:34px;top:420px" width="11" height="13" viewBox="0 0 11 13"><rect x="4" y="0.500" width="3" height="1.500" fill="#505050"/><rect x="0.800" y="1.800" width="9.400" height="1.800" fill="#505050"/><path d="M1.800 4.500h7.400v8H1.800z" fill="#505050"/></svg>
<div style="left:52px;top:418px;width:21px;height:17px;background:#fdfdfd;border:1px solid #dadada;"></div>
<svg style="left:56px;top:420px" width="13" height="13" viewBox="0 0 13 13"><circle cx="6.500" cy="6.500" r="6" fill="#62bd69"/><path d="M6.500 3v7M3 6.500h7" stroke="#fff" stroke-width="2.200"/></svg>
<div style="left:75px;top:418px;width:21px;height:17px;background:#fdfdfd;border:1px solid #dadada;"></div>
<svg style="left:78px;top:419px" width="16" height="15" viewBox="0 0 16 15"><rect x="0.500" y="4" width="4" height="2.500" fill="#2f7fd6"/><path d="M5.500 5.200h3.500" stroke="#555" stroke-width="1"/><path d="M8 3.700l2 1.500-2 1.500z" fill="#555"/><g fill="#b5b5b5"><rect x="11" y="0.500" width="4" height="2.200"/><rect x="11" y="4" width="4" height="2.200"/><rect x="11" y="8" width="4" height="2.200"/><rect x="11" y="11.500" width="4" height="2.200"/></g></svg>
<div style="left:98px;top:418px;width:21px;height:17px;background:#fdfdfd;border:1px solid #dadada;"></div>
<svg style="left:101px;top:419px" width="16" height="15" viewBox="0 0 16 15"><path d="M0.500 6.200l2.500 1.400-2.500 1.400z" fill="#444"/><rect x="3.500" y="5.800" width="10.500" height="3.400" fill="#444"/><g fill="#b5b5b5"><rect x="5" y="1.500" width="3.600" height="2.200"/><rect x="10" y="1.500" width="3.600" height="2.200"/><rect x="5" y="11" width="3.600" height="2.200"/><rect x="10" y="11" width="3.600" height="2.200"/></g></svg>
<div style="left:121px;top:418px;width:21px;height:17px;background:#fdfdfd;border:1px solid #dadada;"></div>
<svg style="left:124px;top:419px" width="16" height="15" viewBox="0 0 16 15"><rect x="0.500" y="6" width="14.500" height="2.600" fill="#2f7fd6"/><g fill="#b5b5b5"><rect x="0.500" y="2" width="3.600" height="2.200"/><rect x="11" y="2" width="3.600" height="2.200"/><rect x="0.500" y="10.500" width="3.600" height="2.200"/><rect x="5.800" y="10.500" width="3.600" height="2.200"/><rect x="11" y="10.500" width="3.600" height="2.200"/></g><path d="M7.600 0.500l1.800 2.200H8.300V4.500H6.900V2.700H5.800z" fill="#444"/></svg>
<div style="left:144px;top:418px;width:21px;height:17px;background:#fdfdfd;border:1px solid #dadada;"></div>
<svg style="left:147px;top:419px" width="16" height="15" viewBox="0 0 16 15"><rect x="0.500" y="6.500" width="14.500" height="2.600" fill="#2f7fd6"/><g fill="#b5b5b5"><rect x="0.500" y="2.300" width="3.600" height="2.200"/><rect x="5.800" y="2.300" width="3.600" height="2.200"/><rect x="11" y="2.300" width="3.600" height="2.200"/><rect x="0.500" y="11" width="3.600" height="2.200"/><rect x="11" y="11" width="3.600" height="2.200"/></g><path d="M7.600 14.500l1.800-2.200H8.300V10.500H6.900v1.800H5.800z" fill="#444"/></svg>
<div class="t" style="left:643px;top:417.5px;width:120px;height:21px;line-height:21px;text-align:right;padding-right:4px;transform-origin:right center;transform:scaleX(0.935);">45,000.00</div>
<div class="t" style="left:802px;top:417.5px;width:96px;height:21px;line-height:21px;text-align:right;padding-right:4px;transform-origin:right center;transform:scaleX(0.935);">24.50</div>
<div class="t" style="left:946px;top:417.5px;width:134px;height:21px;line-height:21px;text-align:right;padding-right:4px;transform-origin:right center;transform:scaleX(0.935);">1,102,500.00</div>
<div class="t" style="left:1081px;top:417.5px;width:77px;height:21px;line-height:21px;text-align:right;padding-right:4px;transform-origin:right center;transform:scaleX(0.935);">3.75 %</div>
<div class="t" style="left:1158px;top:417.5px;width:76px;height:21px;line-height:21px;text-align:right;padding-right:4px;transform-origin:right center;transform:scaleX(0.935);">1.25 %</div>
<div class="t" style="left:1234px;top:417.5px;width:78px;height:21px;line-height:21px;text-align:right;padding-right:4px;transform-origin:right center;transform:scaleX(0.935);">0.00 %</div>
<div class="t" style="left:1311px;top:417.5px;width:125px;height:21px;line-height:21px;text-align:right;padding-right:4px;transform-origin:right center;transform:scaleX(0.935);">0.00</div>
<div class="t" style="left:7px;top:456.7px;width:100px;height:22px;line-height:22px;padding-left:0px;transform-origin:left center;transform:scaleX(1.02);color:#9c4516;font-size:14px;font-weight:bold;">Port Rotation</div>
<div style="left:108px;top:461px;width:13px;height:13px;background:#fff;border:1px solid #c8c8c8;"></div>
<svg style="left:108px;top:461px" width="14" height="14" viewBox="0 0 13 13"><path d="M3 6.600l2.600 2.600L10.200 3.800" fill="none" stroke="#333" stroke-width="1.300"/></svg>
<div class="t" style="left:125.6px;top:458.5px;width:40px;height:21px;line-height:21px;padding-left:0px;transform-origin:left center;transform:scaleX(0.84);">SUEZ</div>
<div style="left:162px;top:461px;width:13px;height:13px;background:#fff;border:1px solid #c8c8c8;"></div>
<svg style="left:162px;top:461px" width="14" height="14" viewBox="0 0 13 13"><path d="M3 6.600l2.600 2.600L10.200 3.800" fill="none" stroke="#333" stroke-width="1.300"/></svg>
<div class="t" style="left:180px;top:458.5px;width:60px;height:21px;line-height:21px;padding-left:0px;transform-origin:left center;transform:scaleX(0.93);">PANAMA</div>
<div style="left:236px;top:461px;width:13px;height:13px;background:#fff;border:1px solid #c8c8c8;"></div>
<div class="t" style="left:253.5px;top:458.5px;width:40px;height:21px;line-height:21px;padding-left:0px;transform-origin:left center;transform:scaleX(0.79);">KIEL</div>
<div class="t b" style="left:293px;top:458.3px;width:800px;height:21px;line-height:21px;padding-left:0px;transform-origin:left center;transform:scaleX(0.967);">Total Duration: 37.71 Days (Ballast: 9.48, Laden: 14.37, ECA: 20.89, Port: 13.86) / (Port local time) 2020-09-10 01:29 ~ 2020-10-17 20:28</div>
<div style="left:7px;top:481px;width:1431px;height:174px;background:#fff;border:1px solid #e2e2e2;"></div>
<div style="left:8px;top:482px;width:20px;height:19px;background:#f5f5f5;"></div>
<div style="left:29px;top:482px;width:69px;height:19px;background:#f5f5f5;"></div>
<div style="left:99px;top:482px;width:237px;height:19px;background:#f5f5f5;"></div>
<div style="left:337px;top:482px;width:23px;height:19px;background:#f5f5f5;"></div>
<div style="left:361px;top:482px;width:23px;height:19px;background:#f5f5f5;"></div>
<div style="left:385px;top:482px;width:23px;height:19px;background:#f5f5f5;"></div>
<div style="left:409px;top:482px;width:66px;height:19px;background:#f5f5f5;"></div>
<div style="left:476px;top:482px;width:66px;height:19px;background:#f5f5f5;"></div>
<div style="left:543px;top:482px;width:47px;height:19px;background:#f5f5f5;"></div>
<div style="left:591px;top:482px;width:42px;height:19px;background:#f5f5f5;"></div>
<div style="left:634px;top:482px;width:59px;height:19px;background:#f5f5f5;"></div>
<div style="left:694px;top:482px;width:95px;height:19px;background:#f5f5f5;"></div>
<div style="left:790px;top:482px;width:58px;height:19px;background:#f5f5f5;"></div>
<div style="left:849px;top:482px;width:59px;height:19px;background:#f5f5f5;"></div>
<div style="left:909px;top:482px;width:23px;height:19px;background:#f5f5f5;"></div>
<div style="left:933px;top:482px;width:81px;height:19px;background:#f5f5f5;"></div>
<div style="left:1015px;top:482px;width:80px;height:19px;background:#f5f5f5;"></div>
<div style="left:1096px;top:482px;width:90px;height:19px;background:#f5f5f5;"></div>
<div style="left:1187px;top:482px;width:124px;height:19px;background:#f5f5f5;"></div>
<div style="left:1312px;top:482px;width:125px;height:19px;background:#f5f5f5;"></div>
<div style="left:8px;top:502px;width:20px;height:20px;background:#cfe4f7;"></div>
<div style="left:29px;top:502px;width:69px;height:20px;background:#f2f5fd;"></div>
<div style="left:99px;top:502px;width:237px;height:20px;background:#f5fcf8;"></div>
<div style="left:385px;top:502px;width:23px;height:20px;background:#f2f5fd;"></div>
<div style="left:409px;top:502px;width:66px;height:20px;background:#f2f5fd;"></div>
<div style="left:476px;top:502px;width:66px;height:20px;background:#f2f5fd;"></div>
<div style="left:543px;top:502px;width:47px;height:20px;background:#f2f5fd;"></div>
<div style="left:591px;top:502px;width:42px;height:20px;background:#f2f5fd;"></div>
<div style="left:634px;top:502px;width:59px;height:20px;background:#f2f5fd;"></div>
<div style="left:694px;top:502px;width:95px;height:20px;background:#f2f5fd;"></div>
<div style="left:790px;top:502px;width:58px;height:20px;background:#f2f5fd;"></div>
<div style="left:849px;top:502px;width:59px;height:20px;background:#f2f5fd;"></div>
<div style="left:909px;top:502px;width:23px;height:20px;background:#f2f5fd;"></div>
<div style="left:933px;top:502px;width:81px;height:20px;background:#f2f5fd;"></div>
<div style="left:1015px;top:502px;width:80px;height:20px;background:#f2f5fd;"></div>
<div style="left:1096px;top:502px;width:90px;height:20px;background:#f2f5fd;"></div>
<div style="left:1187px;top:502px;width:124px;height:20px;background:#f2f5fd;"></div>
<div style="left:29px;top:523px;width:69px;height:19px;background:#f2f5fd;"></div>
<div style="left:409px;top:523px;width:66px;height:19px;background:#ffffe1;"></div>
<div style="left:476px;top:523px;width:66px;height:19px;background:#ffffe1;"></div>
<div style="left:634px;top:523px;width:59px;height:19px;background:#ffffe1;"></div>
<div style="left:849px;top:523px;width:59px;height:19px;background:#ffffe1;"></div>
<div style="left:1187px;top:523px;width:124px;height:19px;background:#ffffe1;"></div>
<div style="left:1312px;top:523px;width:125px;height:19px;background:#ffffe1;"></div>
<div style="left:29px;top:543px;width:69px;height:19px;background:#f2f5fd;"></div>
<div style="left:409px;top:543px;width:66px;height:19px;background:#ffffe1;"></div>
<div style="left:476px;top:543px;width:66px;height:19px;background:#ffffe1;"></div>
<div style="left:634px;top:543px;width:59px;height:19px;background:#ffffe1;"></div>
<div style="left:849px;top:543px;width:59px;height:19px;background:#ffffe1;"></div>
<div style="left:1187px;top:543px;width:124px;height:19px;background:#ffffe1;"></div>
<div style="left:1312px;top:543px;width:125px;height:19px;background:#ffffe1;"></div>
<div style="left:933px;top:523px;width:81px;height:19px;background:#ffffe1;"></div>
<div style="left:1015px;top:523px;width:80px;height:19px;background:#ffffe1;"></div>
<div style="left:337px;top:563px;width:23px;height:19px;background:#f2f5fd;"></div>
<div style="left:361px;top:563px;width:23px;height:19px;background:#f2f5fd;"></div>
<div style="left:385px;top:563px;width:23px;height:19px;background:#f2f5fd;"></div>
<div style="left:409px;top:563px;width:66px;height:19px;background:#f2f5fd;"></div>
<div style="left:476px;top:563px;width:66px;height:19px;background:#f2f5fd;"></div>
<div style="left:543px;top:563px;width:47px;height:19px;background:#f2f5fd;"></div>
<div style="left:591px;top:563px;width:42px;height:19px;background:#f2f5fd;"></div>
<div style="left:634px;top:563px;width:59px;height:19px;background:#f2f5fd;"></div>
<div style="left:694px;top:563px;width:95px;height:19px;background:#f2f5fd;"></div>
<div style="left:790px;top:563px;width:58px;height:19px;background:#f2f5fd;"></div>
<div style="left:849px;top:563px;width:59px;height:19px;background:#f2f5fd;"></div>
<div style="left:909px;top:563px;width:23px;height:19px;background:#f2f5fd;"></div>
<div style="left:933px;top:563px;width:81px;height:19px;background:#f2f5fd;"></div>
<div style="left:1015px;top:563px;width:80px;height:19px;background:#f2f5fd;"></div>
<div style="left:1096px;top:563px;width:90px;height:19px;background:#f2f5fd;"></div>
<div style="left:1187px;top:563px;width:124px;height:19px;background:#f2f5fd;"></div>
<div style="left:1312px;top:563px;width:125px;height:19px;background:#f2f5fd;"></div>
<div style="left:337px;top:583px;width:23px;height:19px;background:#f2f5fd;"></div>
<div style="left:361px;top:583px;width:23px;height:19px;background:#f2f5fd;"></div>
<div style="left:385px;top:583px;width:23px;height:19px;background:#f2f5fd;"></div>
<div style="left:409px;top:583px;width:66px;height:19px;background:#f2f5fd;"></div>
<div style="left:476px;top:583px;width:66px;height:19px;background:#f2f5fd;"></div>
<div style="left:543px;top:583px;width:47px;height:19px;background:#f2f5fd;"></div>
<div style="left:591px;top:583px;width:42px;height:19px;background:#f2f5fd;"></div>
<div style="left:634px;top:583px;width:59px;height:19px;background:#f2f5fd;"></div>
<div style="left:694px;top:583px;width:95px;height:19px;background:#f2f5fd;"></div>
<div style="left:790px;top:583px;width:58px;height:19px;background:#f2f5fd;"></div>
<div style="left:849px;top:583px;width:59px;height:19px;background:#f2f5fd;"></div>
<div style="left:909px;top:583px;width:23px;height:19px;background:#f2f5fd;"></div>
<div style="left:933px;top:583px;width:81px;height:19px;background:#f2f5fd;"></div>
<div style="left:1015px;top:583px;width:80px;height:19px;background:#f2f5fd;"></div>
<div style="left:1096px;top:583px;width:90px;height:19px;background:#f2f5fd;"></div>
<div style="left:1187px;top:583px;width:124px;height:19px;background:#f2f5fd;"></div>
<div style="left:1312px;top:583px;width:125px;height:19px;background:#f2f5fd;"></div>
<div style="left:29px;top:603px;width:69px;height:19px;background:#f2f5fd;"></div>
<div style="left:99px;top:603px;width:237px;height:19px;background:#f2f5fd;"></div>
<div style="left:337px;top:603px;width:23px;height:19px;background:#f2f5fd;"></div>
<div style="left:361px;top:603px;width:23px;height:19px;background:#f2f5fd;"></div>
<div style="left:385px;top:603px;width:23px;height:19px;background:#f2f5fd;"></div>
<div style="left:409px;top:603px;width:66px;height:19px;background:#f2f5fd;"></div>
<div style="left:476px;top:603px;width:66px;height:19px;background:#f2f5fd;"></div>
<div style="left:543px;top:603px;width:47px;height:19px;background:#f2f5fd;"></div>
<div style="left:591px;top:603px;width:42px;height:19px;background:#f2f5fd;"></div>
<div style="left:634px;top:603px;width:59px;height:19px;background:#f2f5fd;"></div>
<div style="left:694px;top:603px;width:95px;height:19px;background:#f2f5fd;"></div>
<div style="left:790px;top:603px;width:58px;height:19px;background:#f2f5fd;"></div>
<div style="left:849px;top:603px;width:59px;height:19px;background:#f2f5fd;"></div>
<div style="left:909px;top:603px;width:23px;height:19px;background:#f2f5fd;"></div>
<div style="left:933px;top:603px;width:81px;height:19px;background:#f2f5fd;"></div>
<div style="left:1015px;top:603px;width:80px;height:19px;background:#f2f5fd;"></div>
<div style="left:1096px;top:603px;width:90px;height:19px;background:#f2f5fd;"></div>
<div style="left:1187px;top:603px;width:124px;height:19px;background:#f2f5fd;"></div>
<div style="left:1312px;top:603px;width:125px;height:19px;background:#f2f5fd;"></div>
<div style="left:7px;top:481px;width:1431px;height:1px;background:#dcdcdc;"></div>
<div style="left:7px;top:501px;width:1431px;height:1px;background:#dcdcdc;"></div>
<div style="left:7px;top:522px;width:1431px;height:1px;background:#dcdcdc;"></div>
<div style="left:7px;top:542px;width:1431px;height:1px;background:#dcdcdc;"></div>
<div style="left:7px;top:562px;width:1431px;height:1px;background:#dcdcdc;"></div>
<div style="left:7px;top:582px;width:1431px;height:1px;background:#dcdcdc;"></div>
<div style="left:7px;top:602px;width:1431px;height:1px;background:#dcdcdc;"></div>
<div style="left:7px;top:622px;width:1431px;height:1px;background:#dcdcdc;"></div>
<div style="left:7px;top:481px;width:1px;height:142px;background:#dcdcdc;"></div>
<div style="left:28px;top:481px;width:1px;height:142px;background:#dcdcdc;"></div>
<div style="left:98px;top:481px;width:1px;height:142px;background:#dcdcdc;"></div>
<div style="left:336px;top:481px;width:1px;height:142px;background:#dcdcdc;"></div>
<div style="left:360px;top:481px;width:1px;height:142px;background:#dcdcdc;"></div>
<div style="left:384px;top:481px;width:1px;height:142px;background:#dcdcdc;"></div>
<div style="left:408px;top:481px;width:1px;height:142px;background:#dcdcdc;"></div>
<div style="left:475px;top:481px;width:1px;height:142px;background:#dcdcdc;"></div>
<div style="left:542px;top:481px;width:1px;height:142px;background:#dcdcdc;"></div>
<div style="left:590px;top:481px;width:1px;height:142px;background:#dcdcdc;"></div>
<div style="left:633px;top:481px;width:1px;height:142px;background:#dcdcdc;"></div>
<div style="left:693px;top:481px;width:1px;height:142px;background:#dcdcdc;"></div>
<div style="left:789px;top:481px;width:1px;height:142px;background:#dcdcdc;"></div>
<div style="left:848px;top:481px;width:1px;height:142px;background:#dcdcdc;"></div>
<div style="left:908px;top:481px;width:1px;height:142px;background:#dcdcdc;"></div>
<div style="left:932px;top:481px;width:1px;height:142px;background:#dcdcdc;"></div>
<div style="left:1014px;top:481px;width:1px;height:142px;background:#dcdcdc;"></div>
<div style="left:1095px;top:481px;width:1px;height:142px;background:#dcdcdc;"></div>
<div style="left:1186px;top:481px;width:1px;height:142px;background:#dcdcdc;"></div>
<div style="left:1311px;top:481px;width:1px;height:142px;background:#dcdcdc;"></div>
<div style="left:1437px;top:481px;width:1px;height:142px;background:#dcdcdc;"></div>
<div style="left:336px;top:482px;width:1px;height:19px;background:#f5f5f5;"></div>
<div style="left:360px;top:482px;width:1px;height:19px;background:#f5f5f5;"></div>
<div style="left:384px;top:482px;width:1px;height:19px;background:#f5f5f5;"></div>
<div style="left:475px;top:482px;width:1px;height:19px;background:#f5f5f5;"></div>
<div style="left:848px;top:482px;width:1px;height:19px;background:#f5f5f5;"></div>
<div style="left:908px;top:482px;width:1px;height:19px;background:#f5f5f5;"></div>
<div style="left:7px;top:521px;width:1431px;height:2px;background:#2186ea;"></div>
<div class="t" style="left:28px;top:482.5px;width:69px;height:21px;line-height:21px;text-align:center;transform-origin:center center;transform:scaleX(0.935);">Type</div>
<div class="t b" style="left:98px;top:482.5px;width:310px;height:21px;line-height:21px;text-align:center;transform-origin:center center;transform:scaleX(0.955);">Port Name or Coordinates</div>
<div class="t" style="left:408px;top:482.5px;width:135px;height:21px;line-height:21px;text-align:center;transform-origin:center center;transform:scaleX(0.935);">Distance / ECA</div>
<div class="t" style="left:542px;top:482.5px;width:48px;height:21px;line-height:21px;text-align:center;transform-origin:center center;transform:scaleX(0.85);">W.F</div>
<div class="t" style="left:590px;top:482.5px;width:43px;height:21px;line-height:21px;text-align:center;transform-origin:center center;transform:scaleX(0.935);">Spd</div>
<div class="t" style="left:633px;top:482.5px;width:59px;height:21px;line-height:21px;text-align:center;transform-origin:center center;transform:scaleX(0.935);">Sea</div>
<div class="t" style="left:693px;top:482.5px;width:96px;height:21px;line-height:21px;text-align:center;transform-origin:center center;transform:scaleX(0.935);">L / D Rate</div>
<div class="t" style="left:789px;top:482.5px;width:144px;height:21px;line-height:21px;text-align:center;transform-origin:center center;transform:scaleX(0.935);">Port (I / W)</div>
<div class="t" style="left:932px;top:482.5px;width:81px;height:21px;line-height:21px;text-align:center;transform-origin:center center;transform:scaleX(0.935);">Dem</div>
<div class="t" style="left:1014px;top:482.5px;width:82px;height:21px;line-height:21px;text-align:center;transform-origin:center center;transform:scaleX(0.935);">Des</div>
<div class="t" style="left:1095px;top:482.5px;width:91px;height:21px;line-height:21px;text-align:center;transform-origin:center center;transform:scaleX(0.935);">Port Charge</div>
<div class="t" style="left:1186px;top:482.5px;width:125px;height:21px;line-height:21px;text-align:center;transform-origin:center center;transform:scaleX(0.935);">Arrival</div>
<div class="t" style="left:1311px;top:482.5px;width:125px;height:21px;line-height:21px;text-align:center;transform-origin:center center;transform:scaleX(0.935);">Departure</div>
<div class="t" style="left:7px;top:502.5px;width:22px;height:21px;line-height:21px;text-align:center;transform-origin:center center;transform:scaleX(0.935);">1</div>
<div class="t" style="left:28px;top:502.5px;width:69px;height:21px;line-height:21px;padding-left:5px;transform-origin:left center;transform:scaleX(0.935);">Ballast</div>
<div class="t" style="left:7px;top:523.5px;width:22px;height:21px;line-height:21px;text-align:center;transform-origin:center center;transform:scaleX(0.935);">2</div>
<div class="t" style="left:28px;top:523.5px;width:69px;height:21px;line-height:21px;padding-left:5px;transform-origin:left center;transform:scaleX(0.935);">Loading</div>
<div class="t" style="left:7px;top:543.5px;width:22px;height:21px;line-height:21px;text-align:center;transform-origin:center center;transform:scaleX(0.935);">3</div>
<div class="t" style="left:28px;top:543.5px;width:69px;height:21px;line-height:21px;padding-left:5px;transform-origin:left center;transform:scaleX(0.935);">Dischg.</div>
<div class="t" style="left:7px;top:563.5px;width:22px;height:21px;line-height:21px;text-align:center;transform-origin:center center;transform:scaleX(0.935);">4</div>
<div class="t" style="left:7px;top:583.5px;width:22px;height:21px;line-height:21px;text-align:center;transform-origin:center center;transform:scaleX(0.935);">5</div>
<div class="t" style="left:28px;top:603.5px;width:69px;height:21px;line-height:21px;padding-left:5px;transform-origin:left center;transform:scaleX(0.935);">Margin</div>
<div class="t" style="left:98px;top:503px;width:238px;height:21px;line-height:21px;padding-left:5px;transform-origin:left center;transform:scaleX(0.935);">Dunkirk (FR) [+01:00]</div>
<svg style="left:319.5px;top:504.6px" width="14" height="14" viewBox="0 0 14 14"><circle cx="7" cy="7" r="6.600" fill="#1470d2"/><rect x="6.100" y="2.600" width="2" height="2" fill="#fff"/><path d="M5.300 6h2.900v4.300h0.900v1.100H5.100v-1.100h1.100V7.100H5.300z" fill="#fff"/></svg>
<div class="t" style="left:98px;top:523.5px;width:238px;height:21px;line-height:21px;padding-left:5px;transform-origin:left center;transform:scaleX(0.935);">New York (US) [-05:00]</div>
<svg style="left:302.4px;top:525px" width="15" height="15" viewBox="0 0 15 15"><circle cx="6" cy="6" r="4.700" fill="none" stroke="#666" stroke-width="1.150"/><path d="M9.500 9.500L13.300 13.300" stroke="#666" stroke-width="1.600" stroke-linecap="round"/></svg>
<svg style="left:319.5px;top:525.1px" width="14" height="14" viewBox="0 0 14 14"><circle cx="7" cy="7" r="6.600" fill="#1470d2"/><rect x="6.100" y="2.600" width="2" height="2" fill="#fff"/><path d="M5.300 6h2.900v4.300h0.900v1.100H5.100v-1.100h1.100V7.100H5.300z" fill="#fff"/></svg>
<div class="t" style="left:98px;top:543.5px;width:238px;height:21px;line-height:21px;padding-left:5px;transform-origin:left center;transform:scaleX(0.935);">Izmir (TR) [+03:00]</div>
<svg style="left:302.4px;top:545.2px" width="15" height="15" viewBox="0 0 15 15"><circle cx="6" cy="6" r="4.700" fill="none" stroke="#666" stroke-width="1.150"/><path d="M9.500 9.500L13.300 13.300" stroke="#666" stroke-width="1.600" stroke-linecap="round"/></svg>
<svg style="left:319.5px;top:545.1px" width="14" height="14" viewBox="0 0 14 14"><circle cx="7" cy="7" r="6.600" fill="#1470d2"/><rect x="6.100" y="2.600" width="2" height="2" fill="#fff"/><path d="M5.300 6h2.900v4.300h0.900v1.100H5.100v-1.100h1.100V7.100H5.300z" fill="#fff"/></svg>
<svg style="left:319.5px;top:566px" width="14" height="14" viewBox="0 0 14 14"><g transform="rotate(-45 7 7) translate(7 7) scale(1.13 1.1) translate(-7 -7)" fill="#1470d2"><rect x="2.400" y="5.400" width="7.800" height="3.200"/><rect x="10.900" y="5.400" width="2.500" height="3.200" rx="0.700"/><path d="M1.900 5.900L0.300 7l1.600 1.100z"/></g></svg>
<svg style="left:365px;top:503.5px" width="14" height="16" viewBox="0 0 14 16"><path d="M1.400 14.300l1.600-3.400h8l1.600 3.400z" fill="#a9c9f7"/><path d="M7 12C5.200 9.500 2.900 8.300 2.900 6.200a4.100 4.100 0 018.200 0C11.100 8.300 8.800 9.500 7 12z" fill="#2fc22f"/><circle cx="7" cy="6.100" r="2.100" fill="#fff"/></svg>
<svg style="left:365px;top:524px" width="14" height="16" viewBox="0 0 14 16"><path d="M1.400 14.300l1.600-3.400h8l1.600 3.400z" fill="#a9c9f7"/><path d="M7 12C5.200 9.500 2.900 8.300 2.900 6.200a4.100 4.100 0 018.200 0C11.100 8.300 8.800 9.500 7 12z" fill="#2fc22f"/><circle cx="7" cy="6.100" r="2.100" fill="#fff"/></svg>
<svg style="left:365px;top:544px" width="14" height="16" viewBox="0 0 14 16"><path d="M1.400 14.300l1.600-3.400h8l1.600 3.400z" fill="#a9c9f7"/><path d="M7 12C5.200 9.500 2.900 8.300 2.900 6.200a4.100 4.100 0 018.200 0C11.100 8.300 8.800 9.500 7 12z" fill="#2fc22f"/><circle cx="7" cy="6.100" r="2.100" fill="#fff"/></svg>
<svg style="left:388px;top:525px" width="16" height="12" viewBox="0 0 16 12"><path d="M0.800 10.300V8a6.900 6.900 0 0113.800 0v2.300z" fill="#fafafa" stroke="#9a9a9a" stroke-width="1"/><path d="M3.300 9.500V8.200a4.400 4.400 0 018.800 0V9.500" fill="none" stroke="#a5a5a5" stroke-width="1.300" stroke-dasharray="1.800 1.300"/><path d="M7.300 9l3.400-4" stroke="#8a8a8a" stroke-width="1.300"/></svg>
<svg style="left:388px;top:545px" width="16" height="12" viewBox="0 0 16 12"><path d="M0.800 10.300V8a6.900 6.900 0 0113.800 0v2.300z" fill="#fafafa" stroke="#9a9a9a" stroke-width="1"/><path d="M3.300 9.500V8.200a4.400 4.400 0 018.800 0V9.500" fill="none" stroke="#a5a5a5" stroke-width="1.300" stroke-dasharray="1.800 1.300"/><path d="M7.300 9l3.400-4" stroke="#8a8a8a" stroke-width="1.300"/></svg>
<div class="t" style="left:408px;top:523.5px;width:67px;height:21px;line-height:21px;text-align:right;padding-right:4px;transform-origin:right center;transform:scaleX(0.935);">3,186</div>
<div class="t" style="left:475px;top:523.5px;width:68px;height:21px;line-height:21px;text-align:right;padding-right:4px;transform-origin:right center;transform:scaleX(0.935);">1,505</div>
<div class="t" style="left:542px;top:523.5px;width:48px;height:21px;line-height:21px;text-align:right;padding-right:4px;transform-origin:right center;transform:scaleX(0.935);">0.0 %</div>
<div class="t" style="left:590px;top:523.5px;width:43px;height:21px;line-height:21px;text-align:right;padding-right:4px;transform-origin:right center;transform:scaleX(0.935);">14.00</div>
<div class="t" style="left:633px;top:523.5px;width:59px;height:21px;line-height:21px;text-align:right;padding-right:4px;transform-origin:right center;transform:scaleX(0.935);">9.48</div>
<svg style="left:695.6px;top:525.3px" width="15" height="15" viewBox="0 0 15 15"><circle cx="6" cy="6" r="4.700" fill="none" stroke="#666" stroke-width="1.150"/><path d="M9.500 9.500L13.300 13.300" stroke="#666" stroke-width="1.600" stroke-linecap="round"/></svg>
<div class="t" style="left:693px;top:523.5px;width:96px;height:21px;line-height:21px;text-align:right;padding-right:4px;transform-origin:right center;transform:scaleX(0.935);">7,000.00</div>
<div class="t" style="left:789px;top:523.5px;width:60px;height:21px;line-height:21px;text-align:right;padding-right:4px;transform-origin:right center;transform:scaleX(0.935);">0.50</div>
<div class="t" style="left:848px;top:523.5px;width:59px;height:21px;line-height:21px;text-align:right;padding-right:4px;transform-origin:right center;transform:scaleX(0.935);">6.43</div>
<svg style="left:912.5px;top:524px" width="16" height="16" viewBox="0 0 16 16"><path d="M1 7.500L13 2l1 1.200L5.500 8.500z" fill="#b9b9b9"/><path d="M5 8h2.200l.8 6H4.200z" fill="#b0b0b0"/><rect x="3" y="13.500" width="6.500" height="1.500" fill="#a5a5a5"/><path d="M14 3v7" stroke="#c9c9c9" stroke-width="1"/></svg>
<div class="t" style="left:1014px;top:523.5px;width:82px;height:21px;line-height:21px;text-align:right;padding-right:4px;transform-origin:right center;transform:scaleX(0.935);">5,000.00</div>
<svg style="left:1097.2px;top:525.3px" width="15" height="15" viewBox="0 0 15 15"><circle cx="6" cy="6" r="4.700" fill="none" stroke="#666" stroke-width="1.150"/><path d="M9.500 9.500L13.300 13.300" stroke="#666" stroke-width="1.600" stroke-linecap="round"/></svg>
<div class="t" style="left:1095px;top:523.5px;width:91px;height:21px;line-height:21px;text-align:right;padding-right:4px;transform-origin:right center;transform:scaleX(0.935);">100,000.00</div>
<div class="t" style="left:1186px;top:523.5px;width:125px;height:21px;line-height:21px;padding-left:5px;transform-origin:left center;transform:scaleX(0.935);">2020-09-19 07:01</div>
<div class="t" style="left:1311px;top:523.5px;width:125px;height:21px;line-height:21px;padding-left:5px;transform-origin:left center;transform:scaleX(0.935);">2020-09-26 05:18</div>
<div class="t" style="left:408px;top:543.5px;width:67px;height:21px;line-height:21px;text-align:right;padding-right:4px;transform-origin:right center;transform:scaleX(0.935);">4,828</div>
<div class="t" style="left:475px;top:543.5px;width:68px;height:21px;line-height:21px;text-align:right;padding-right:4px;transform-origin:right center;transform:scaleX(0.935);">856</div>
<div class="t" style="left:542px;top:543.5px;width:48px;height:21px;line-height:21px;text-align:right;padding-right:4px;transform-origin:right center;transform:scaleX(0.935);">0.0 %</div>
<div class="t" style="left:590px;top:543.5px;width:43px;height:21px;line-height:21px;text-align:right;padding-right:4px;transform-origin:right center;transform:scaleX(0.935);">14.00</div>
<div class="t" style="left:633px;top:543.5px;width:59px;height:21px;line-height:21px;text-align:right;padding-right:4px;transform-origin:right center;transform:scaleX(0.935);">14.37</div>
<svg style="left:695.6px;top:545.3px" width="15" height="15" viewBox="0 0 15 15"><circle cx="6" cy="6" r="4.700" fill="none" stroke="#666" stroke-width="1.150"/><path d="M9.500 9.500L13.300 13.300" stroke="#666" stroke-width="1.600" stroke-linecap="round"/></svg>
<div class="t" style="left:693px;top:543.5px;width:96px;height:21px;line-height:21px;text-align:right;padding-right:4px;transform-origin:right center;transform:scaleX(0.935);">7,000.00</div>
<div class="t" style="left:789px;top:543.5px;width:60px;height:21px;line-height:21px;text-align:right;padding-right:4px;transform-origin:right center;transform:scaleX(0.935);">0.50</div>
<div class="t" style="left:848px;top:543.5px;width:59px;height:21px;line-height:21px;text-align:right;padding-right:4px;transform-origin:right center;transform:scaleX(0.935);">6.43</div>
<svg style="left:912.5px;top:544px" width="16" height="16" viewBox="0 0 16 16"><path d="M1 7.500L13 2l1 1.200L5.500 8.500z" fill="#b9b9b9"/><path d="M5 8h2.200l.8 6H4.200z" fill="#b0b0b0"/><rect x="3" y="13.500" width="6.500" height="1.500" fill="#a5a5a5"/><path d="M14 3v7" stroke="#c9c9c9" stroke-width="1"/></svg>
<div class="t" style="left:1014px;top:543.5px;width:82px;height:21px;line-height:21px;text-align:right;padding-right:4px;transform-origin:right center;transform:scaleX(0.935);">5,999.00</div>
<svg style="left:1097.2px;top:545.3px" width="15" height="15" viewBox="0 0 15 15"><circle cx="6" cy="6" r="4.700" fill="none" stroke="#666" stroke-width="1.150"/><path d="M9.500 9.500L13.300 13.300" stroke="#666" stroke-width="1.600" stroke-linecap="round"/></svg>
<div class="t" style="left:1095px;top:543.5px;width:91px;height:21px;line-height:21px;text-align:right;padding-right:4px;transform-origin:right center;transform:scaleX(0.935);">50,000.00</div>
<div class="t" style="left:1186px;top:543.5px;width:125px;height:21px;line-height:21px;padding-left:5px;transform-origin:left center;transform:scaleX(0.935);">2020-10-10 22:11</div>
<div class="t" style="left:1311px;top:543.5px;width:125px;height:21px;line-height:21px;padding-left:5px;transform-origin:left center;transform:scaleX(0.935);">2020-10-17 20:28</div>
<div class="t" style="left:1311px;top:503px;width:125px;height:21px;line-height:21px;padding-left:5px;transform-origin:left center;transform:scaleX(0.935);">2020-09-10 01:29</div>
<svg style="left:1422px;top:505px" width="14" height="14" viewBox="0 0 14 14"><rect x="1" y="2.500" width="12" height="11" fill="#fff" stroke="#666" stroke-width="1"/><rect x="1" y="1.500" width="12" height="3" fill="#e03a2a"/><rect x="3" y="0.300" width="1.600" height="2.400" fill="#e03a2a"/><rect x="9.400" y="0.300" width="1.600" height="2.400" fill="#e03a2a"/><g fill="#666"><rect x="3.200" y="6.500" width="1.600" height="1.600"/><rect x="6.200" y="6.500" width="1.600" height="1.600"/><rect x="9.200" y="6.500" width="1.600" height="1.600"/><rect x="3.200" y="9.500" width="1.600" height="1.600"/><rect x="6.200" y="9.500" width="1.600" height="1.600"/><rect x="9.200" y="9.500" width="1.600" height="1.600"/></g></svg>
<svg style="left:1296px;top:525px" width="14" height="14" viewBox="0 0 14 14"><rect x="1" y="2.500" width="12" height="11" fill="#fff" stroke="#666" stroke-width="1"/><rect x="1" y="1.500" width="12" height="3" fill="#e03a2a"/><rect x="3" y="0.300" width="1.600" height="2.400" fill="#e03a2a"/><rect x="9.400" y="0.300" width="1.600" height="2.400" fill="#e03a2a"/><g fill="#666"><rect x="3.200" y="6.500" width="1.600" height="1.600"/><rect x="6.200" y="6.500" width="1.600" height="1.600"/><rect x="9.200" y="6.500" width="1.600" height="1.600"/><rect x="3.200" y="9.500" width="1.600" height="1.600"/><rect x="6.200" y="9.500" width="1.600" height="1.600"/><rect x="9.200" y="9.500" width="1.600" height="1.600"/></g></svg>
<div style="left:29px;top:630px;width:21px;height:17px;background:#fdfdfd;border:1px solid #dadada;"></div>
<svg style="left:34px;top:632px" width="11" height="13" viewBox="0 0 11 13"><rect x="4" y="0.500" width="3" height="1.500" fill="#505050"/><rect x="0.800" y="1.800" width="9.400" height="1.800" fill="#505050"/><path d="M1.800 4.500h7.400v8H1.800z" fill="#505050"/></svg>
<div style="left:52px;top:630px;width:21px;height:17px;background:#fdfdfd;border:1px solid #dadada;"></div>
<svg style="left:56px;top:632px" width="13" height="13" viewBox="0 0 13 13"><circle cx="6.500" cy="6.500" r="6" fill="#62bd69"/><path d="M6.500 3v7M3 6.500h7" stroke="#fff" stroke-width="2.200"/></svg>
<div style="left:75px;top:630px;width:21px;height:17px;background:#fdfdfd;border:1px solid #dadada;"></div>
<svg style="left:78px;top:631px" width="16" height="15" viewBox="0 0 16 15"><rect x="0.500" y="4" width="4" height="2.500" fill="#2f7fd6"/><path d="M5.500 5.200h3.500" stroke="#555" stroke-width="1"/><path d="M8 3.700l2 1.500-2 1.500z" fill="#555"/><g fill="#b5b5b5"><rect x="11" y="0.500" width="4" height="2.200"/><rect x="11" y="4" width="4" height="2.200"/><rect x="11" y="8" width="4" height="2.200"/><rect x="11" y="11.500" width="4" height="2.200"/></g></svg>
<div style="left:98px;top:630px;width:21px;height:17px;background:#fdfdfd;border:1px solid #dadada;"></div>
<svg style="left:101px;top:631px" width="16" height="15" viewBox="0 0 16 15"><path d="M0.500 6.200l2.500 1.400-2.500 1.400z" fill="#444"/><rect x="3.500" y="5.800" width="10.500" height="3.400" fill="#444"/><g fill="#b5b5b5"><rect x="5" y="1.500" width="3.600" height="2.200"/><rect x="10" y="1.500" width="3.600" height="2.200"/><rect x="5" y="11" width="3.600" height="2.200"/><rect x="10" y="11" width="3.600" height="2.200"/></g></svg>
<div style="left:121px;top:630px;width:21px;height:17px;background:#fdfdfd;border:1px solid #dadada;"></div>
<svg style="left:124px;top:631px" width="16" height="15" viewBox="0 0 16 15"><rect x="0.500" y="6" width="14.500" height="2.600" fill="#2f7fd6"/><g fill="#b5b5b5"><rect x="0.500" y="2" width="3.600" height="2.200"/><rect x="11" y="2" width="3.600" height="2.200"/><rect x="0.500" y="10.500" width="3.600" height="2.200"/><rect x="5.800" y="10.500" width="3.600" height="2.200"/><rect x="11" y="10.500" width="3.600" height="2.200"/></g><path d="M7.600 0.500l1.800 2.200H8.300V4.500H6.900V2.700H5.800z" fill="#444"/></svg>
<div style="left:144px;top:630px;width:21px;height:17px;background:#fdfdfd;border:1px solid #dadada;"></div>
<svg style="left:147px;top:631px" width="16" height="15" viewBox="0 0 16 15"><rect x="0.500" y="6.500" width="14.500" height="2.600" fill="#2f7fd6"/><g fill="#b5b5b5"><rect x="0.500" y="2.300" width="3.600" height="2.200"/><rect x="5.800" y="2.300" width="3.600" height="2.200"/><rect x="11" y="2.300" width="3.600" height="2.200"/><rect x="0.500" y="11" width="3.600" height="2.200"/><rect x="11" y="11" width="3.600" height="2.200"/></g><path d="M7.600 14.500l1.800-2.200H8.300V10.500H6.900v1.800H5.800z" fill="#444"/></svg>
<div class="t b" style="left:408px;top:629.5px;width:67px;height:21px;line-height:21px;text-align:right;padding-right:4px;transform-origin:right center;transform:scaleX(0.955);">8,014</div>
<div class="t b" style="left:475px;top:629.5px;width:68px;height:21px;line-height:21px;text-align:right;padding-right:4px;transform-origin:right center;transform:scaleX(0.955);">2,361</div>
<div class="t b" style="left:1186px;top:629.5px;width:125px;height:21px;line-height:21px;padding-left:5px;transform-origin:left center;transform:scaleX(0.99);">2020-09-10 01:29</div>
<div class="t b" style="left:1311px;top:629.5px;width:125px;height:21px;line-height:21px;padding-left:5px;transform-origin:left center;transform:scaleX(0.99);">2020-10-17 20:28</div>
<div style="left:7px;top:660px;width:115px;height:21px;background:#fdfdfd;border:1px solid #d0d0d0;"></div>
<div class="t b" style="left:7px;top:660.8px;width:115px;height:21px;line-height:21px;text-align:center;transform-origin:center center;transform:scaleX(0.955);">Get Distance (F9)</div>
<div style="left:127px;top:660px;width:117px;height:21px;background:#fdfdfd;border:1px solid #d0d0d0;"></div>
<div class="t b" style="left:127px;top:660.8px;width:117px;height:21px;line-height:21px;text-align:center;transform-origin:center center;transform:scaleX(0.955);">To Distance (F10)</div>
<div style="left:1081px;top:660px;width:56px;height:21px;background:#fdfdfd;border:1px solid #d0d0d0;"></div>
<div style="left:1142px;top:660px;width:90px;height:21px;background:#b7d9f3;border:1px solid #9ccaf0;"></div>
<div style="left:1237px;top:660px;width:80px;height:21px;background:#fdfdfd;border:1px solid #d0d0d0;"></div>
<div class="t" style="left:1266px;top:660.8px;width:51px;height:21px;line-height:21px;padding-left:0px;transform-origin:left center;transform:scaleX(0.935);">PC Time</div>
<svg style="left:1248px;top:664px" width="14" height="13" viewBox="0 0 14 13"><rect x="0.700" y="0.700" width="12.600" height="8.600" fill="#fff" stroke="#6e6e6e" stroke-width="1.200"/><rect x="5.500" y="9.500" width="3" height="2" fill="#6e6e6e"/><rect x="3.500" y="11.300" width="7" height="1.300" fill="#6e6e6e"/></svg>
<div style="left:1322px;top:660px;width:116px;height:21px;background:#fdfdfd;border:1px solid #d0d0d0;"></div>
<div class="t" style="left:1327px;top:660.8px;width:111px;height:21px;line-height:21px;padding-left:0px;transform-origin:left center;transform:scaleX(0.935);">Port local time</div>
<svg style="left:1425px;top:669px" width="8" height="4" viewBox="0 0 8 4"><path d="M0 0h8L4 4z" fill="#333"/></svg>
<div class="t" style="left:7px;top:696.9px;width:200px;height:22px;line-height:22px;padding-left:0px;transform-origin:left center;transform:scaleX(0.985);color:#9c4516;font-size:14px;font-weight:bold;">Operation Expense</div>
<div style="left:9px;top:721px;width:115px;height:19px;background:#f5f5f5;"></div>
<div style="left:253px;top:721px;width:115px;height:19px;background:#f5f5f5;"></div>
<div style="left:125px;top:721px;width:127px;height:19px;background:#ffffe1;"></div>
<div style="left:369px;top:721px;width:127px;height:19px;background:#ffffe1;"></div>
<div style="left:9px;top:741px;width:115px;height:19px;background:#f5f5f5;"></div>
<div style="left:253px;top:741px;width:115px;height:19px;background:#f5f5f5;"></div>
<div style="left:125px;top:741px;width:127px;height:19px;background:#ffffe1;"></div>
<div style="left:369px;top:741px;width:127px;height:19px;background:#ffffe1;"></div>
<div style="left:9px;top:761px;width:115px;height:20px;background:#f5f5f5;"></div>
<div style="left:253px;top:761px;width:115px;height:20px;background:#f5f5f5;"></div>
<div style="left:125px;top:761px;width:127px;height:20px;background:#ffffe1;"></div>
<div style="left:369px;top:761px;width:127px;height:20px;background:#ffffe1;"></div>
<div style="left:9px;top:782px;width:115px;height:19px;background:#f5f5f5;"></div>
<div style="left:253px;top:782px;width:115px;height:19px;background:#f5f5f5;"></div>
<div style="left:125px;top:782px;width:127px;height:19px;background:#ffffe1;"></div>
<div style="left:369px;top:782px;width:127px;height:19px;background:#ffffe1;"></div>
<div style="left:9px;top:802px;width:115px;height:19px;background:#f5f5f5;"></div>
<div style="left:253px;top:802px;width:115px;height:19px;background:#f5f5f5;"></div>
<div style="left:125px;top:802px;width:127px;height:19px;background:#ffffe1;"></div>
<div style="left:369px;top:802px;width:127px;height:19px;background:#ffffe1;"></div>
<div style="left:9px;top:822px;width:115px;height:19px;background:#f5f5f5;"></div>
<div style="left:253px;top:822px;width:115px;height:19px;background:#f5f5f5;"></div>
<div style="left:125px;top:822px;width:127px;height:19px;background:#ffffe1;"></div>
<div style="left:369px;top:822px;width:127px;height:19px;background:#ffffe1;"></div>
<div style="left:8px;top:720px;width:489px;height:1px;background:#dcdcdc;"></div>
<div style="left:8px;top:740px;width:489px;height:1px;background:#dcdcdc;"></div>
<div style="left:8px;top:760px;width:489px;height:1px;background:#dcdcdc;"></div>
<div style="left:8px;top:781px;width:489px;height:1px;background:#dcdcdc;"></div>
<div style="left:8px;top:801px;width:489px;height:1px;background:#dcdcdc;"></div>
<div style="left:8px;top:821px;width:489px;height:1px;background:#dcdcdc;"></div>
<div style="left:8px;top:841px;width:489px;height:1px;background:#dcdcdc;"></div>
<div style="left:8px;top:720px;width:1px;height:122px;background:#dcdcdc;"></div>
<div style="left:124px;top:720px;width:1px;height:122px;background:#dcdcdc;"></div>
<div style="left:252px;top:720px;width:1px;height:122px;background:#dcdcdc;"></div>
<div style="left:368px;top:720px;width:1px;height:122px;background:#dcdcdc;"></div>
<div style="left:496px;top:720px;width:1px;height:122px;background:#dcdcdc;"></div>
<div class="t" style="left:8px;top:721.5px;width:117px;height:21px;line-height:21px;padding-left:5px;transform-origin:left center;transform:scaleX(0.935);">Dem/Des</div>
<svg style="left:126.6px;top:723.3px" width="15" height="15" viewBox="0 0 15 15"><circle cx="6" cy="6" r="4.700" fill="none" stroke="#666" stroke-width="1.150"/><path d="M9.500 9.500L13.300 13.300" stroke="#666" stroke-width="1.600" stroke-linecap="round"/></svg>
<div class="t" style="left:124px;top:721.5px;width:127px;height:21px;line-height:21px;text-align:right;padding-right:4px;transform-origin:right center;transform:scaleX(0.935);">10,999.00</div>
<div class="t" style="left:252px;top:721.5px;width:117px;height:21px;line-height:21px;padding-left:5px;transform-origin:left center;transform:scaleX(0.935);">Bunker Expense</div>
<svg style="left:370.7px;top:723.3px" width="15" height="15" viewBox="0 0 15 15"><circle cx="6" cy="6" r="4.700" fill="none" stroke="#666" stroke-width="1.150"/><path d="M9.500 9.500L13.300 13.300" stroke="#666" stroke-width="1.600" stroke-linecap="round"/></svg>
<div class="t" style="left:368px;top:721.5px;width:128px;height:21px;line-height:21px;text-align:right;padding-right:4px;transform-origin:right center;transform:scaleX(0.935);">179,640.32</div>
<div class="t" style="left:8px;top:741.5px;width:117px;height:21px;line-height:21px;padding-left:5px;transform-origin:left center;transform:scaleX(0.935);">Add Comm.</div>
<svg style="left:126.6px;top:743.3px" width="15" height="15" viewBox="0 0 15 15"><circle cx="6" cy="6" r="4.700" fill="none" stroke="#666" stroke-width="1.150"/><path d="M9.500 9.500L13.300 13.300" stroke="#666" stroke-width="1.600" stroke-linecap="round"/></svg>
<div class="t" style="left:124px;top:741.5px;width:127px;height:21px;line-height:21px;text-align:right;padding-right:4px;transform-origin:right center;transform:scaleX(0.935);">41,343.75</div>
<div class="t" style="left:252px;top:741.5px;width:117px;height:21px;line-height:21px;padding-left:5px;transform-origin:left center;transform:scaleX(0.85);">C.E.V.</div>
<svg style="left:370.7px;top:743.3px" width="15" height="15" viewBox="0 0 15 15"><circle cx="6" cy="6" r="4.700" fill="none" stroke="#666" stroke-width="1.150"/><path d="M9.500 9.500L13.300 13.300" stroke="#666" stroke-width="1.600" stroke-linecap="round"/></svg>
<div class="t" style="left:368px;top:741.5px;width:128px;height:21px;line-height:21px;text-align:right;padding-right:4px;transform-origin:right center;transform:scaleX(0.935);">1,795.50</div>
<div class="t" style="left:8px;top:761.5px;width:117px;height:21px;line-height:21px;padding-left:5px;transform-origin:left center;transform:scaleX(0.935);">Brokerage</div>
<svg style="left:126.6px;top:763.3px" width="15" height="15" viewBox="0 0 15 15"><circle cx="6" cy="6" r="4.700" fill="none" stroke="#666" stroke-width="1.150"/><path d="M9.500 9.500L13.300 13.300" stroke="#666" stroke-width="1.600" stroke-linecap="round"/></svg>
<div class="t" style="left:124px;top:761.5px;width:127px;height:21px;line-height:21px;text-align:right;padding-right:4px;transform-origin:right center;transform:scaleX(0.935);">13,781.25</div>
<div class="t" style="left:252px;top:761.5px;width:117px;height:21px;line-height:21px;padding-left:5px;transform-origin:left center;transform:scaleX(0.85);">ILOHC</div>
<svg style="left:370.7px;top:763.3px" width="15" height="15" viewBox="0 0 15 15"><circle cx="6" cy="6" r="4.700" fill="none" stroke="#666" stroke-width="1.150"/><path d="M9.500 9.500L13.300 13.300" stroke="#666" stroke-width="1.600" stroke-linecap="round"/></svg>
<div class="t" style="left:368px;top:761.5px;width:128px;height:21px;line-height:21px;text-align:right;padding-right:4px;transform-origin:right center;transform:scaleX(0.935);">4,500.00</div>
<div class="t" style="left:8px;top:782.5px;width:117px;height:21px;line-height:21px;padding-left:5px;transform-origin:left center;transform:scaleX(0.935);">Freight Tax</div>
<svg style="left:126.6px;top:784.3px" width="15" height="15" viewBox="0 0 15 15"><circle cx="6" cy="6" r="4.700" fill="none" stroke="#666" stroke-width="1.150"/><path d="M9.500 9.500L13.300 13.300" stroke="#666" stroke-width="1.600" stroke-linecap="round"/></svg>
<div class="t" style="left:124px;top:782.5px;width:127px;height:21px;line-height:21px;text-align:right;padding-right:4px;transform-origin:right center;transform:scaleX(0.935);">0.00</div>
<div class="t" style="left:252px;top:782.5px;width:117px;height:21px;line-height:21px;padding-left:5px;transform-origin:left center;transform:scaleX(0.935);">Ballast Bonus</div>
<svg style="left:370.7px;top:784.3px" width="15" height="15" viewBox="0 0 15 15"><circle cx="6" cy="6" r="4.700" fill="none" stroke="#666" stroke-width="1.150"/><path d="M9.500 9.500L13.300 13.300" stroke="#666" stroke-width="1.600" stroke-linecap="round"/></svg>
<div class="t" style="left:8px;top:802.5px;width:117px;height:21px;line-height:21px;padding-left:5px;transform-origin:left center;transform:scaleX(0.935);">Liner Terms</div>
<svg style="left:126.6px;top:804.3px" width="15" height="15" viewBox="0 0 15 15"><circle cx="6" cy="6" r="4.700" fill="none" stroke="#666" stroke-width="1.150"/><path d="M9.500 9.500L13.300 13.300" stroke="#666" stroke-width="1.600" stroke-linecap="round"/></svg>
<div class="t" style="left:124px;top:802.5px;width:127px;height:21px;line-height:21px;text-align:right;padding-right:4px;transform-origin:right center;transform:scaleX(0.935);">0.00</div>
<div class="t" style="left:252px;top:802.5px;width:117px;height:21px;line-height:21px;padding-left:5px;transform-origin:left center;transform:scaleX(0.935);">Routing Service</div>
<svg style="left:370.7px;top:804.3px" width="15" height="15" viewBox="0 0 15 15"><circle cx="6" cy="6" r="4.700" fill="none" stroke="#666" stroke-width="1.150"/><path d="M9.500 9.500L13.300 13.300" stroke="#666" stroke-width="1.600" stroke-linecap="round"/></svg>
<div class="t" style="left:8px;top:822.5px;width:117px;height:21px;line-height:21px;padding-left:5px;transform-origin:left center;transform:scaleX(0.935);">Port Charge</div>
<svg style="left:126.6px;top:824.3px" width="15" height="15" viewBox="0 0 15 15"><circle cx="6" cy="6" r="4.700" fill="none" stroke="#666" stroke-width="1.150"/><path d="M9.500 9.500L13.300 13.300" stroke="#666" stroke-width="1.600" stroke-linecap="round"/></svg>
<div class="t" style="left:124px;top:822.5px;width:127px;height:21px;line-height:21px;text-align:right;padding-right:4px;transform-origin:right center;transform:scaleX(0.935);">150,000.00</div>
<div class="t" style="left:252px;top:822.5px;width:117px;height:21px;line-height:21px;padding-left:5px;transform-origin:left center;transform:scaleX(0.935);">Others</div>
<svg style="left:370.7px;top:824.3px" width="15" height="15" viewBox="0 0 15 15"><circle cx="6" cy="6" r="4.700" fill="none" stroke="#666" stroke-width="1.150"/><path d="M9.500 9.500L13.300 13.300" stroke="#666" stroke-width="1.600" stroke-linecap="round"/></svg>
<div class="t" style="left:368px;top:822.5px;width:128px;height:21px;line-height:21px;text-align:right;padding-right:4px;transform-origin:right center;transform:scaleX(0.935);">0.00</div>
<div class="t" style="left:507px;top:696.9px;width:200px;height:22px;line-height:22px;padding-left:0px;transform-origin:left center;transform:scaleX(0.985);color:#9c4516;font-size:14px;font-weight:bold;">Bunker Expense</div>
<div style="left:692px;top:698px;width:111px;height:19px;background:#fdfdfd;border:1px solid #d0d0d0;"></div>
<div class="t b" style="left:722px;top:698.8px;width:81px;height:19px;line-height:19px;padding-left:0px;transform-origin:left center;transform:scaleX(0.945);">Bunker Index</div>
<svg style="left:701px;top:700px" width="16" height="14" viewBox="0 0 16 14"><path d="M1 2l6 5 7-6" fill="none" stroke="#49b86a" stroke-width="1.200"/><path d="M1 6.500l6 2.500 8-2" fill="none" stroke="#4a90d9" stroke-width="1.200"/><path d="M1 12.500h14" fill="none" stroke="#555" stroke-width="1.200"/><g fill="#555"><circle cx="2" cy="12.500" r="1.300"/><circle cx="14" cy="12.500" r="1.300"/></g><g fill="#4a90d9"><circle cx="2" cy="6.500" r="1.300"/><circle cx="14" cy="7" r="1.300"/></g><g fill="#49b86a"><circle cx="2" cy="2" r="1.300"/><circle cx="14" cy="1.500" r="1.300"/></g></svg>
<div style="left:805px;top:698px;width:133px;height:19px;background:#fdfdfd;border:1px solid #d0d0d0;"></div>
<div class="t b" style="left:835px;top:698.8px;width:103px;height:19px;line-height:19px;padding-left:0px;transform-origin:left center;transform:scaleX(0.94);">Bunker Simulator</div>
<svg style="left:816px;top:700px" width="11" height="14" viewBox="0 0 11 14"><path d="M5.500 0.500C8 5 10.500 7 10.500 9.500a5 4.500 0 01-10 0C0.500 7 3 5 5.500 0.500z" fill="#555"/><path d="M3 9.500q0-2 1.500-4" stroke="#9a9a9a" stroke-width="1" fill="none"/></svg>
<div style="left:508px;top:721px;width:83px;height:19px;background:#f5f5f5;"></div>
<div style="left:592px;top:721px;width:114px;height:19px;background:#f5f5f5;"></div>
<div style="left:707px;top:721px;width:114px;height:19px;background:#f5f5f5;"></div>
<div style="left:822px;top:721px;width:116px;height:19px;background:#f5f5f5;"></div>
<div style="left:508px;top:741px;width:83px;height:19px;background:#f5f5f5;"></div>
<div style="left:707px;top:741px;width:114px;height:19px;background:#ffffe1;"></div>
<div style="left:822px;top:741px;width:116px;height:19px;background:#ffffe1;"></div>
<div style="left:508px;top:761px;width:83px;height:20px;background:#f5f5f5;"></div>
<div style="left:707px;top:761px;width:114px;height:20px;background:#ffffe1;"></div>
<div style="left:822px;top:761px;width:116px;height:20px;background:#ffffe1;"></div>
<div style="left:508px;top:782px;width:83px;height:19px;background:#f5f5f5;"></div>
<div style="left:707px;top:782px;width:114px;height:19px;background:#ffffe1;"></div>
<div style="left:822px;top:782px;width:116px;height:19px;background:#ffffe1;"></div>
<div style="left:508px;top:802px;width:83px;height:19px;background:#f2f5fd;"></div>
<div style="left:592px;top:802px;width:114px;height:19px;background:#f2f5fd;"></div>
<div style="left:707px;top:802px;width:114px;height:19px;background:#f2f5fd;"></div>
<div style="left:822px;top:802px;width:116px;height:19px;background:#f2f5fd;"></div>
<div style="left:508px;top:822px;width:83px;height:19px;background:#f2f5fd;"></div>
<div style="left:592px;top:822px;width:114px;height:19px;background:#f2f5fd;"></div>
<div style="left:707px;top:822px;width:114px;height:19px;background:#f2f5fd;"></div>
<div style="left:822px;top:822px;width:116px;height:19px;background:#f2f5fd;"></div>
<div style="left:507px;top:720px;width:432px;height:1px;background:#dcdcdc;"></div>
<div style="left:507px;top:740px;width:432px;height:1px;background:#dcdcdc;"></div>
<div style="left:507px;top:760px;width:432px;height:1px;background:#dcdcdc;"></div>
<div style="left:507px;top:781px;width:432px;height:1px;background:#dcdcdc;"></div>
<div style="left:507px;top:801px;width:432px;height:1px;background:#dcdcdc;"></div>
<div style="left:507px;top:821px;width:432px;height:1px;background:#dcdcdc;"></div>
<div style="left:507px;top:841px;width:432px;height:1px;background:#dcdcdc;"></div>
<div style="left:507px;top:720px;width:1px;height:122px;background:#dcdcdc;"></div>
<div style="left:591px;top:720px;width:1px;height:122px;background:#dcdcdc;"></div>
<div style="left:706px;top:720px;width:1px;height:122px;background:#dcdcdc;"></div>
<div style="left:821px;top:720px;width:1px;height:122px;background:#dcdcdc;"></div>
<div style="left:938px;top:720px;width:1px;height:122px;background:#dcdcdc;"></div>
<div class="t" style="left:591px;top:721.5px;width:116px;height:21px;line-height:21px;text-align:center;transform-origin:center center;transform:scaleX(0.935);">Price / MT</div>
<div style="left:721px;top:724px;width:12px;height:12px;background:#fff;border:1px solid #c8c8c8;"></div>
<svg style="left:721px;top:724px" width="13" height="13" viewBox="0 0 13 13"><path d="M3 6.600l2.600 2.600L10.200 3.800" fill="none" stroke="#333" stroke-width="1.300"/></svg>
<div class="t" style="left:741px;top:721.5px;width:80px;height:21px;line-height:21px;padding-left:0px;transform-origin:left center;transform:scaleX(0.935);">Consumption</div>
<div class="t" style="left:821px;top:721.5px;width:116px;height:21px;line-height:21px;text-align:center;transform-origin:center center;transform:scaleX(0.935);">Expense</div>
<div class="t" style="left:507px;top:741.5px;width:84px;height:21px;line-height:21px;padding-left:5px;transform-origin:left center;transform:scaleX(0.85);">VLSFO</div>
<div class="t" style="left:591px;top:741.5px;width:116px;height:21px;line-height:21px;text-align:right;padding-right:4px;transform-origin:right center;transform:scaleX(0.935);">340.00</div>
<div class="t" style="left:706px;top:741.5px;width:115px;height:21px;line-height:21px;text-align:right;padding-right:4px;transform-origin:right center;transform:scaleX(0.935);">443.31</div>
<div class="t" style="left:821px;top:741.5px;width:116px;height:21px;line-height:21px;text-align:right;padding-right:4px;transform-origin:right center;transform:scaleX(0.935);">150,726.51</div>
<div class="t" style="left:507px;top:761.5px;width:84px;height:21px;line-height:21px;padding-left:5px;transform-origin:left center;transform:scaleX(0.85);">MGO</div>
<div class="t" style="left:591px;top:761.5px;width:116px;height:21px;line-height:21px;text-align:right;padding-right:4px;transform-origin:right center;transform:scaleX(0.935);">380.00</div>
<div class="t" style="left:706px;top:761.5px;width:115px;height:21px;line-height:21px;text-align:right;padding-right:4px;transform-origin:right center;transform:scaleX(0.935);">8.96</div>
<div class="t" style="left:821px;top:761.5px;width:116px;height:21px;line-height:21px;text-align:right;padding-right:4px;transform-origin:right center;transform:scaleX(0.935);">3,405.67</div>
<div class="t" style="left:507px;top:782.5px;width:84px;height:21px;line-height:21px;padding-left:5px;transform-origin:left center;transform:scaleX(0.85);">ULSFO</div>
<div class="t" style="left:591px;top:782.5px;width:116px;height:21px;line-height:21px;text-align:right;padding-right:4px;transform-origin:right center;transform:scaleX(0.935);">100.00</div>
<div class="t" style="left:706px;top:782.5px;width:115px;height:21px;line-height:21px;text-align:right;padding-right:4px;transform-origin:right center;transform:scaleX(0.935);">255.08</div>
<div class="t" style="left:821px;top:782.5px;width:116px;height:21px;line-height:21px;text-align:right;padding-right:4px;transform-origin:right center;transform:scaleX(0.935);">25,508.15</div>
<div class="t" style="left:949px;top:696.9px;width:100px;height:22px;line-height:22px;padding-left:0px;transform-origin:left center;transform:scaleX(0.985);color:#9c4516;font-size:14px;font-weight:bold;">Result</div>
<div style="left:1151px;top:698px;width:98px;height:19px;background:#fdfdfd;border:1px solid #d0d0d0;"></div>
<div class="t b" style="left:1180px;top:698.8px;width:69px;height:19px;line-height:19px;padding-left:0px;transform-origin:left center;transform:scaleX(0.9);">Result Plus</div>
<svg style="left:1160px;top:700px" width="16" height="14" viewBox="0 0 16 14"><path d="M3 0.500v5M0.500 3h5" stroke="#3cb54a" stroke-width="1.600"/><g fill="#888"><rect x="9" y="1" width="6" height="1.400"/><rect x="9" y="3.500" width="6" height="1.400"/><rect x="9" y="6" width="6" height="1.400"/><rect x="9" y="8.500" width="6" height="1.400"/><rect x="9" y="11" width="6" height="1.400"/></g><rect x="8" y="0.500" width="1" height="13" fill="#aaa"/></svg>
<div style="left:1251px;top:698px;width:104px;height:19px;background:#fdfdfd;border:1px solid #d0d0d0;"></div>
<div class="t b" style="left:1280.5px;top:698.8px;width:74.5px;height:19px;line-height:19px;padding-left:0px;transform-origin:left center;transform:scaleX(0.925);">Comparison</div>
<svg style="left:1261px;top:701px" width="14" height="12" viewBox="0 0 14 12"><rect x="0" y="0" width="9" height="3" fill="#3cb57a"/><rect x="0" y="4.500" width="13" height="3" fill="#3b7fd0"/><rect x="0" y="9" width="10" height="3" fill="#555"/></svg>
<div style="left:1357px;top:698px;width:81px;height:19px;background:#fdfdfd;border:1px solid #d0d0d0;"></div>
<div class="t b" style="left:1386.5px;top:698.8px;width:51.5px;height:19px;line-height:19px;padding-left:0px;transform-origin:left center;transform:scaleX(0.94);">Remark</div>
<svg style="left:1364px;top:698px" width="18" height="18" viewBox="0 0 18 18"><path d="M3 5h9v11H3z" fill="#fff" stroke="#555" stroke-width="1.200"/><circle cx="5" cy="5" r="4" fill="#f9a825"/><path d="M7 13l1-3.500 5.500-5.500 2.500 2.500-5.500 5.500z" fill="#2f74c5"/></svg>
<div style="left:950px;top:721px;width:115px;height:19px;background:#f5f5f5;"></div>
<div style="left:950px;top:741px;width:115px;height:19px;background:#f5f5f5;"></div>
<div style="left:950px;top:761px;width:115px;height:20px;background:#f5f5f5;"></div>
<div style="left:950px;top:782px;width:115px;height:19px;background:#f5f5f5;"></div>
<div style="left:950px;top:802px;width:115px;height:19px;background:#f5f5f5;"></div>
<div style="left:1066px;top:761px;width:127px;height:20px;background:#ffffe1;"></div>
<div style="left:1066px;top:782px;width:127px;height:19px;background:#ffffe1;"></div>
<div style="left:1066px;top:802px;width:127px;height:19px;background:#ffffe1;"></div>
<div style="left:949px;top:720px;width:245px;height:1px;background:#dcdcdc;"></div>
<div style="left:949px;top:740px;width:245px;height:1px;background:#dcdcdc;"></div>
<div style="left:949px;top:760px;width:245px;height:1px;background:#dcdcdc;"></div>
<div style="left:949px;top:781px;width:245px;height:1px;background:#dcdcdc;"></div>
<div style="left:949px;top:801px;width:245px;height:1px;background:#dcdcdc;"></div>
<div style="left:949px;top:821px;width:245px;height:1px;background:#dcdcdc;"></div>
<div style="left:949px;top:720px;width:1px;height:102px;background:#dcdcdc;"></div>
<div style="left:1065px;top:720px;width:1px;height:102px;background:#dcdcdc;"></div>
<div style="left:1193px;top:720px;width:1px;height:102px;background:#dcdcdc;"></div>
<div style="left:1194px;top:721px;width:115px;height:19px;background:#f5f5f5;"></div>
<div style="left:1310px;top:721px;width:127px;height:19px;background:#ffffe1;"></div>
<div style="left:1194px;top:741px;width:115px;height:19px;background:#f5f5f5;"></div>
<div style="left:1310px;top:741px;width:127px;height:19px;background:#ffffe1;"></div>
<div style="left:1194px;top:761px;width:115px;height:20px;background:#f5f5f5;"></div>
<div style="left:1310px;top:761px;width:127px;height:20px;background:#ffffe1;"></div>
<div style="left:1194px;top:782px;width:115px;height:19px;background:#f5f5f5;"></div>
<div style="left:1310px;top:782px;width:127px;height:19px;background:#ffffe1;"></div>
<div style="left:1194px;top:802px;width:115px;height:19px;background:#f5f5f5;"></div>
<div style="left:1310px;top:802px;width:127px;height:19px;background:#ffffe1;"></div>
<div style="left:1194px;top:822px;width:115px;height:19px;background:#f5f5f5;"></div>
<div style="left:1310px;top:822px;width:127px;height:19px;background:#ffffe1;"></div>
<div style="left:1193px;top:720px;width:245px;height:1px;background:#dcdcdc;"></div>
<div style="left:1193px;top:740px;width:245px;height:1px;background:#dcdcdc;"></div>
<div style="left:1193px;top:760px;width:245px;height:1px;background:#dcdcdc;"></div>
<div style="left:1193px;top:781px;width:245px;height:1px;background:#dcdcdc;"></div>
<div style="left:1193px;top:801px;width:245px;height:1px;background:#dcdcdc;"></div>
<div style="left:1193px;top:821px;width:245px;height:1px;background:#dcdcdc;"></div>
<div style="left:1193px;top:841px;width:245px;height:1px;background:#dcdcdc;"></div>
<div style="left:1193px;top:720px;width:1px;height:122px;background:#dcdcdc;"></div>
<div style="left:1309px;top:720px;width:1px;height:122px;background:#dcdcdc;"></div>
<div style="left:1437px;top:720px;width:1px;height:122px;background:#dcdcdc;"></div>
<div class="t" style="left:949px;top:721.5px;width:116px;height:21px;line-height:21px;padding-left:5px;transform-origin:left center;transform:scaleX(0.935);">Hire / Day</div>
<div class="t" style="left:1065px;top:721.5px;width:128px;height:21px;line-height:21px;text-align:right;padding-right:4px;transform-origin:right center;transform:scaleX(0.935);">9,000.00</div>
<div class="t" style="left:1193px;top:721.5px;width:116px;height:21px;line-height:21px;padding-left:5px;transform-origin:left center;transform:scaleX(0.935);">Revenue</div>
<div class="t" style="left:1309px;top:721.5px;width:128px;height:21px;line-height:21px;text-align:right;padding-right:4px;transform-origin:right center;transform:scaleX(0.935);">1,102,500.00</div>
<div class="t" style="left:949px;top:741.5px;width:116px;height:21px;line-height:21px;padding-left:5px;transform-origin:left center;transform:scaleX(0.935);">H/Add Comm.</div>
<div class="t" style="left:1065px;top:741.5px;width:128px;height:21px;line-height:21px;text-align:right;padding-right:4px;transform-origin:right center;transform:scaleX(0.935);">3.75 %</div>
<div class="t" style="left:1193px;top:741.5px;width:116px;height:21px;line-height:21px;padding-left:5px;transform-origin:left center;transform:scaleX(0.935);">Op. Expense</div>
<div class="t" style="left:1309px;top:741.5px;width:128px;height:21px;line-height:21px;text-align:right;padding-right:4px;transform-origin:right center;transform:scaleX(0.935);">402,059.82</div>
<div class="t" style="left:949px;top:761.5px;width:116px;height:21px;line-height:21px;padding-left:5px;transform-origin:left center;transform:scaleX(0.935);">Net Hire</div>
<div class="t" style="left:1065px;top:761.5px;width:128px;height:21px;line-height:21px;text-align:right;padding-right:4px;transform-origin:right center;transform:scaleX(0.935);">8,662.50</div>
<div class="t" style="left:1193px;top:761.5px;width:116px;height:21px;line-height:21px;padding-left:5px;transform-origin:left center;transform:scaleX(0.935);">Op. Profit</div>
<div class="t" style="left:1309px;top:761.5px;width:128px;height:21px;line-height:21px;text-align:right;padding-right:4px;transform-origin:right center;transform:scaleX(0.935);">700,440.18</div>
<div class="t" style="left:949px;top:782.5px;width:116px;height:21px;line-height:21px;padding-left:5px;transform-origin:left center;transform:scaleX(0.935);">Off Hire</div>
<div class="t" style="left:1065px;top:782.5px;width:128px;height:21px;line-height:21px;text-align:right;padding-right:4px;transform-origin:right center;transform:scaleX(0.935);"><span style="color:#111">0.00</span></div>
<div class="t" style="left:1193px;top:782.5px;width:116px;height:21px;line-height:21px;padding-left:5px;transform-origin:left center;transform:scaleX(0.935);">Total Hire</div>
<div class="t" style="left:1309px;top:782.5px;width:128px;height:21px;line-height:21px;text-align:right;padding-right:4px;transform-origin:right center;transform:scaleX(0.935);">326,648.21</div>
<div class="t" style="left:949px;top:802.5px;width:116px;height:21px;line-height:21px;padding-left:5px;transform-origin:left center;transform:scaleX(0.935);">C/Base</div>
<div class="t" style="left:1065px;top:802.5px;width:128px;height:21px;line-height:21px;text-align:right;padding-right:4px;transform-origin:right center;transform:scaleX(0.935);">18,575.22</div>
<div class="t" style="left:1193px;top:802.5px;width:116px;height:21px;line-height:21px;padding-left:5px;transform-origin:left center;transform:scaleX(0.935);">Total Expense</div>
<div class="t" style="left:1309px;top:802.5px;width:128px;height:21px;line-height:21px;text-align:right;padding-right:4px;transform-origin:right center;transform:scaleX(0.935);">728,708.03</div>
<div class="t" style="left:1193px;top:822.5px;width:116px;height:21px;line-height:21px;padding-left:5px;transform-origin:left center;transform:scaleX(0.9);"><b>PROFIT (KRW)</b></div>
<div class="t" style="left:1309px;top:822.5px;width:128px;height:21px;line-height:21px;text-align:right;padding-right:4px;transform-origin:right center;transform:scaleX(0.935);">373,791.97</div>
<svg style="left:1067.5px;top:784.5px" width="15" height="15" viewBox="0 0 15 15"><circle cx="6" cy="6" r="4.700" fill="none" stroke="#666" stroke-width="1.150"/><path d="M9.500 9.500L13.300 13.300" stroke="#666" stroke-width="1.600" stroke-linecap="round"/></svg>
<div style="left:2px;top:878px;width:1442px;height:26px;background:#38825a;"></div>
<div style="left:2px;top:878px;width:1442px;height:1px;background:#217346;"></div>
<div class="t" style="left:10.5px;top:881px;width:32px;height:22px;line-height:22px;padding-left:0px;transform-origin:left center;transform:scaleX(0.89);color:#fff;">Reset</div>
<div style="left:43px;top:890px;width:7px;height:2px;background:#4a3a42;"></div>
<div style="left:54px;top:889px;width:114px;height:4px;background:#ececec;"></div>
<div style="left:63px;top:884px;width:7px;height:13px;background:#444;border:1px solid #ddd;"></div>
<div class="t" style="left:170.5px;top:881px;width:12px;height:22px;line-height:22px;padding-left:0px;transform-origin:left center;transform:scaleX(0.935);color:#3c3c3c;font-weight:bold;font-size:15px;">+</div>
<div class="t" style="left:191.5px;top:881px;width:40px;height:22px;line-height:22px;padding-left:0px;transform-origin:left center;transform:scaleX(0.89);color:#fff;">100 %</div>
<div style="left:234px;top:880px;width:1px;height:22px;background:#9cc3ab;"></div>
<div class="t" style="left:235px;top:879.5px;width:236px;height:23px;line-height:23px;text-align:center;transform-origin:center center;transform:scaleX(0.935);color:#fff;">Great Circle Line</div>
<div style="left:471px;top:880px;width:1px;height:22px;background:#9cc3ab;"></div>
<div class="t" style="left:472px;top:879.5px;width:385px;height:23px;line-height:23px;text-align:center;transform-origin:center center;transform:scaleX(0.935);color:#fff;">Anti Piracy : JWLA024 (17th May 2019)</div>
<div style="left:857px;top:880px;width:1px;height:22px;background:#9cc3ab;"></div>
<div class="t" style="left:858px;top:879.5px;width:288px;height:23px;line-height:23px;text-align:center;transform-origin:center center;transform:scaleX(0.935);color:#fff;">ECA : IMO, Each Country</div>
<svg style="left:1435px;top:894.5px" width="8" height="8" viewBox="0 0 8 8"><g fill="#dbe9e1"><rect x="6.2" y="0.2" width="1.200" height="1.200"/><rect x="4.2" y="2.2" width="1.200" height="1.200"/><rect x="6.2" y="2.2" width="1.200" height="1.200"/><rect x="2.2" y="4.2" width="1.200" height="1.200"/><rect x="4.2" y="4.2" width="1.200" height="1.200"/><rect x="6.2" y="4.2" width="1.200" height="1.200"/><rect x="0.2" y="6.2" width="1.200" height="1.200"/><rect x="2.2" y="6.2" width="1.200" height="1.200"/><rect x="4.2" y="6.2" width="1.200" height="1.200"/><rect x="6.2" y="6.2" width="1.200" height="1.200"/></g></svg>
<div style="left:156px;top:179px;width:354px;height:72px;background:#7096c8;border:1px solid #000;"></div>
<div class="t" style="left:171px;top:202px;width:354px;height:28px;line-height:28px;padding-left:0px;transform-origin:left center;font-family:'DejaVu Sans','Liberation Sans',sans-serif;color:#000;white-space:nowrap;letter-spacing:0.350px;word-spacing:0.500px;font-size:22px;">Millstone sheet is created.</div>
<div style="left:841px;top:215px;width:378px;height:84px;background:#7096c8;border:1px solid #000;"></div>
<div class="t" style="left:856px;top:228.5px;width:378px;height:28px;line-height:28px;padding-left:0px;transform-origin:left center;font-family:'DejaVu Sans','Liberation Sans',sans-serif;color:#000;white-space:nowrap;letter-spacing:0.350px;word-spacing:0.500px;font-size:22px;"><span style="letter-spacing:0.500px">You can edit the Milestone</span></div>
<div class="t" style="left:856px;top:256.5px;width:378px;height:28px;line-height:28px;padding-left:0px;transform-origin:left center;font-family:'DejaVu Sans','Liberation Sans',sans-serif;color:#000;white-space:nowrap;letter-spacing:0.350px;word-spacing:0.500px;font-size:22px;"><span style="letter-spacing:0.500px">sheet when needed.</span></div>
<div style="left:568px;top:569px;width:675px;height:107px;background:#7096c8;border:1px solid #000;"></div>
<div class="t" style="left:583px;top:582px;width:675px;height:27.5px;line-height:27.5px;padding-left:0px;transform-origin:left center;font-family:'DejaVu Sans','Liberation Sans',sans-serif;color:#000;white-space:nowrap;letter-spacing:0.350px;word-spacing:0.500px;font-size:22px;">Edits made to the Milestone sheet do not affect the</div>
<div class="t" style="left:583px;top:609.5px;width:675px;height:27.5px;line-height:27.5px;padding-left:0px;transform-origin:left center;font-family:'DejaVu Sans','Liberation Sans',sans-serif;color:#000;white-space:nowrap;letter-spacing:0.350px;word-spacing:0.500px;font-size:22px;"><span style="letter-spacing:0.440px">latest stage of the operation records. Recovery of the</span></div>
<div class="t" style="left:583px;top:637px;width:675px;height:27.5px;line-height:27.5px;padding-left:0px;transform-origin:left center;font-family:'DejaVu Sans','Liberation Sans',sans-serif;color:#000;white-space:nowrap;letter-spacing:0.350px;word-spacing:0.500px;font-size:22px;">Milestone sheet is not supported.</div>
<svg style="left:55px;top:130px" width="135" height="45" viewBox="55 130 135 45"><path d="M62 135.500V167.500H180V135" fill="none" stroke="#ff0000" stroke-width="2" stroke-dasharray="7 2.700"/></svg>
<svg style="left:820px;top:150px" width="150" height="50" viewBox="820 150 150 50"><rect x="829" y="156.200" width="130" height="34.300" rx="1.500" fill="none" stroke="#ff0000" stroke-width="2" stroke-dasharray="7 2.700"/></svg>
<div style="left:37.5px;top:109.5px;width:36px;height:36px;background:#7ea2d0;border:1.300px solid #111;border-radius:50%;"></div>
<div class="t" style="left:37.5px;top:109.9px;width:36px;height:36px;line-height:36px;text-align:center;transform-origin:center center;color:#fff;font-weight:bold;font-size:18.500px;">3</div>
<div style="left:806px;top:132.4px;width:36px;height:36px;background:#7ea2d0;border:1.300px solid #111;border-radius:50%;"></div>
<div class="t" style="left:806px;top:132.8px;width:36px;height:36px;line-height:36px;text-align:center;transform-origin:center center;color:#fff;font-weight:bold;font-size:18.500px;">4</div>
<div style="left:545px;top:546px;width:36px;height:36px;background:#7ea2d0;border:1.300px solid #111;border-radius:50%;"></div>
<div class="t" style="left:545px;top:546.4px;width:36px;height:36px;line-height:36px;text-align:center;transform-origin:center center;color:#fff;font-weight:bold;font-size:18.500px;">5</div>
</div></body></html>
